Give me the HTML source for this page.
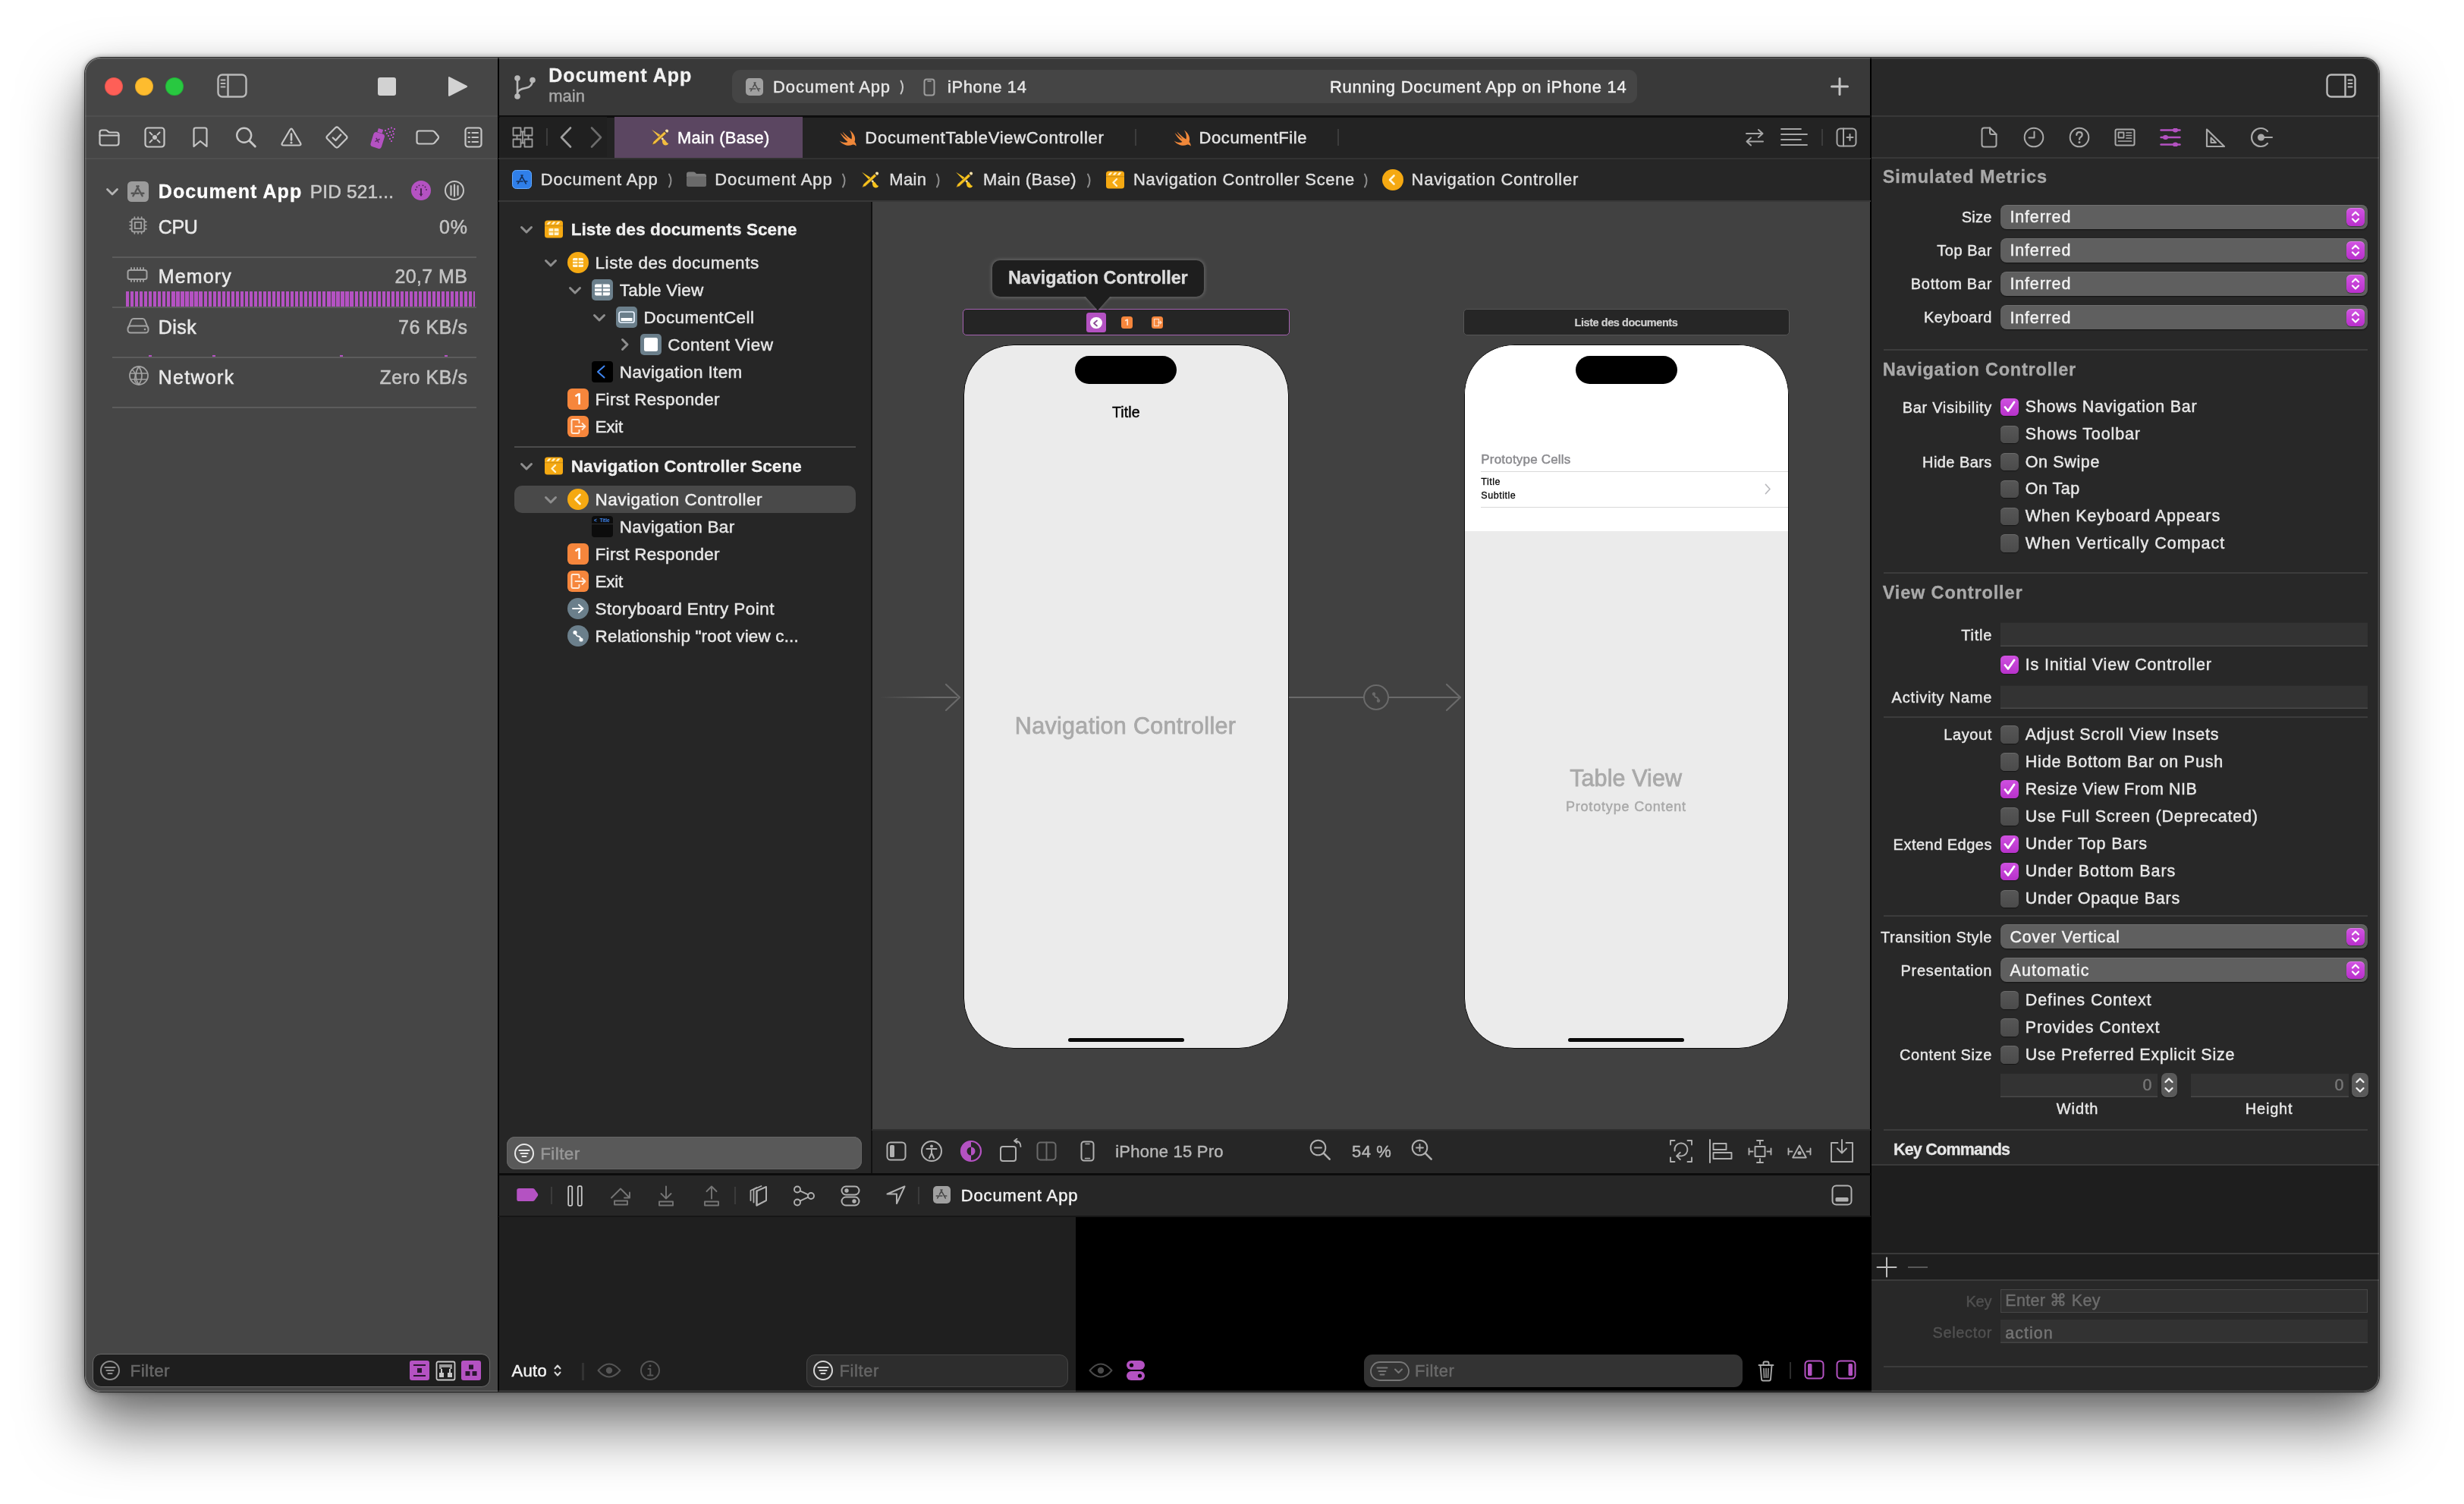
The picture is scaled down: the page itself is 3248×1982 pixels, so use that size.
<!DOCTYPE html>
<html lang="en"><head><meta charset="utf-8"><title>Xcode</title>
<style>
html,body{margin:0;padding:0}
body{width:3248px;height:1982px;background:#fff;position:relative;overflow:hidden;font-family:"Liberation Sans", sans-serif;}
#shadow{position:absolute;left:112px;top:76px;width:3024px;height:1758px;border-radius:21px;
 box-shadow:0 0 0 1px rgba(0,0,0,.75),0 0 6px 1px rgba(0,0,0,.35),0 44px 80px 4px rgba(0,0,0,.52),0 12px 34px rgba(0,0,0,.17);}
#win{position:absolute;left:0;top:0;width:3248px;height:1982px;clip-path:inset(76px 112px 148px 112px round 21px);will-change:transform;}
#win div,#win span,#win svg{position:absolute;box-sizing:border-box}
#win span{white-space:pre}

</style></head><body>
<div id="shadow"></div>
<div id="win">
<div style="left:112px;top:75px;width:545px;height:1760px;background:#464646;"></div>
<div style="left:657px;top:75px;width:1809px;height:78px;background:#393939;"></div>
<div style="left:657px;top:153px;width:1809px;height:55px;background:#232323;"></div>
<div style="left:657px;top:208px;width:1809px;height:57px;background:#262626;"></div>
<div style="left:657px;top:265px;width:492px;height:1282px;background:#262626;"></div>
<div style="left:1149px;top:265px;width:1317px;height:1224px;background:#414141;"></div>
<div style="left:1149px;top:1489px;width:1317px;height:58px;background:#262626;"></div>
<div style="left:657px;top:1547px;width:1809px;height:56px;background:#262626;"></div>
<div style="left:657px;top:1603px;width:761px;height:232px;background:#1f1f1f;"></div>
<div style="left:1418px;top:1603px;width:1048px;height:232px;background:#000;"></div>
<div style="left:2466px;top:75px;width:670px;height:1760px;background:#282828;"></div>
<div style="left:656px;top:75px;width:2px;height:1760px;background:#000;"></div>
<div style="left:2465px;top:75px;width:2px;height:1760px;background:#000;"></div>
<div style="left:1148px;top:265px;width:2px;height:1282px;background:#111;"></div>
<div style="left:657px;top:151.5px;width:1809px;height:3px;background:#0e0e0e;"></div>
<div style="left:657px;top:207.5px;width:1809px;height:2px;background:#323232;"></div>
<div style="left:657px;top:263.5px;width:1809px;height:2px;background:#383838;"></div>
<div style="left:657px;top:1545.5px;width:1809px;height:3px;background:#0c0c0c;"></div>
<div style="left:657px;top:1602px;width:1809px;height:2px;background:#161616;"></div>
<div style="left:1149px;top:1488px;width:1317px;height:2px;background:#2e2e2e;"></div>
<div style="left:112px;top:152.3px;width:544px;height:2px;background:#4f4f4f;"></div>
<div style="left:112px;top:208px;width:544px;height:2px;background:#4f4f4f;"></div>
<div style="left:2467px;top:152px;width:669px;height:2px;background:#383838;"></div>
<div style="left:2467px;top:207px;width:669px;height:2px;background:#383838;"></div>
<div style="left:138px;top:102px;width:24px;height:24px;background:#fe5f57;border-radius:50%;box-shadow:inset 0 0 0 1px rgba(0,0,0,.12);"></div>
<div style="left:178px;top:102px;width:24px;height:24px;background:#febc2e;border-radius:50%;box-shadow:inset 0 0 0 1px rgba(0,0,0,.12);"></div>
<div style="left:218px;top:102px;width:24px;height:24px;background:#28c840;border-radius:50%;box-shadow:inset 0 0 0 1px rgba(0,0,0,.12);"></div>
<svg style="left:286px;top:97px;" width="40" height="32" viewBox="0 0 40 32"><rect x="1.5" y="1.5" width="37" height="29" rx="5.5" fill="none" stroke="#b9b9b9" stroke-width="2.4" stroke-linecap="round" stroke-linejoin="round" /><path d="M14.5 2v28" fill="none" stroke="#b9b9b9" stroke-width="2.4" stroke-linecap="round" stroke-linejoin="round" /><path d="M5.5 8.5h5M5.5 13h5M5.5 17.5h5" fill="none" stroke="#b9b9b9" stroke-width="2" stroke-linecap="round" stroke-linejoin="round" /></svg>
<div style="left:498px;top:102px;width:24px;height:24px;background:#d2d2d2;border-radius:3px;"></div>
<svg style="left:589px;top:98px;" width="30" height="32" viewBox="0 0 30 32"><path d="M3.5 3.2 L26.5 15 Q28 16 26.5 17 L3.5 28.8 Q2 29.3 2 27.5 L2 4.5 Q2 2.7 3.5 3.2Z" fill="#d2d2d2"/></svg>
<svg style="left:130px;top:169px;" width="28" height="24" viewBox="0 0 28 24"><path d="M1.5 5.5 q0-3 3-3 h4.5 q1.5 0 2.5 1 l1 1 q1 1 2.5 1 h8.5 q3 0 3 3 v11 q0 3-3 3 h-19 q-3 0-3-3z" fill="none" stroke="#c6c6c6" stroke-width="2.2" stroke-linecap="round" stroke-linejoin="round" /><path d="M1.5 9.5h25" fill="none" stroke="#c6c6c6" stroke-width="2.2" stroke-linecap="round" stroke-linejoin="round" /></svg>
<svg style="left:190px;top:167px;" width="28" height="28" viewBox="0 0 28 28"><rect x="1.5" y="1.5" width="25" height="25" rx="3.5" fill="none" stroke="#c6c6c6" stroke-width="2.2" stroke-linecap="round" stroke-linejoin="round" /><circle cx="14" cy="14" r="3" fill="#c6c6c6"/><path d="M7.5 7.5l3 3M20.5 7.5l-3 3M7.5 20.5l3-3M20.5 20.5l-3-3" fill="none" stroke="#c6c6c6" stroke-width="2" stroke-linecap="round" stroke-linejoin="round" /></svg>
<svg style="left:254px;top:167px;" width="20" height="28" viewBox="0 0 20 28"><path d="M1.5 4 q0-2.5 2.5-2.5 h12 q2.5 0 2.5 2.5 v22 l-8.5-7 l-8.5 7z" fill="none" stroke="#c6c6c6" stroke-width="2.2" stroke-linecap="round" stroke-linejoin="round" /></svg>
<svg style="left:310px;top:166px;" width="30" height="30" viewBox="0 0 30 30"><circle cx="11.7" cy="12.3" r="9.5" fill="none" stroke="#c6c6c6" stroke-width="2.4" stroke-linecap="round" stroke-linejoin="round" /><path d="M18.8 19.500l7.5 7.5" fill="none" stroke="#c6c6c6" stroke-width="3" stroke-linecap="round" stroke-linejoin="round" /></svg>
<svg style="left:370px;top:168px;" width="28" height="26" viewBox="0 0 28 26"><path d="M12.3 3 q1.7-2.8 3.4 0 l10.3 17.5 q1.5 3-1.8 3 h-20.4 q-3.3 0-1.8-3z" fill="none" stroke="#c6c6c6" stroke-width="2.2" stroke-linecap="round" stroke-linejoin="round" /><path d="M14 8.500v8" fill="none" stroke="#c6c6c6" stroke-width="2.6" stroke-linecap="round" stroke-linejoin="round" /><circle cx="14" cy="20" r="1.6" fill="#c6c6c6"/></svg>
<svg style="left:429px;top:166px;" width="30" height="30" viewBox="0 0 30 30"><path d="M13.2 2.3 q1.8-1.6 3.6 0 l10.9 10.9 q1.6 1.8 0 3.6 l-10.9 10.9 q-1.8 1.6-3.6 0 l-10.9-10.9 q-1.6-1.8 0-3.600z" fill="none" stroke="#c6c6c6" stroke-width="2.2" stroke-linecap="round" stroke-linejoin="round" /><path d="M9.8 15.500l3.7 3.500l6.7-7.5" fill="none" stroke="#c6c6c6" stroke-width="2.4" stroke-linecap="round" stroke-linejoin="round" /></svg>
<svg style="left:488px;top:166px;" width="34" height="30" viewBox="0 0 34 30"><g transform="rotate(17 10 18)"><rect x="2.5" y="9" width="15" height="20" rx="3.5" fill="#b452c2"/><rect x="6.5" y="3.5" width="6.5" height="5" fill="#b452c2"/><path d="M7.3 16.500l5 5M12.3 16.500l-5 5" stroke="#5a2f63" stroke-width="1.5" fill="none"/></g><rect x="19" y="5" width="2" height="2" fill="#b452c2"/><rect x="23" y="3" width="2" height="2" fill="#b452c2"/><rect x="27" y="1.5" width="2" height="2" fill="#b452c2"/><rect x="21" y="9" width="2" height="2" fill="#b452c2"/><rect x="25" y="7" width="2" height="2" fill="#b452c2"/><rect x="29" y="6" width="2" height="2" fill="#b452c2"/><rect x="23" y="12" width="2" height="2" fill="#b452c2"/><rect x="27" y="11" width="2" height="2" fill="#b452c2"/><rect x="30" y="9.5" width="2" height="2" fill="#b452c2"/><rect x="25" y="16" width="2" height="2" fill="#b452c2"/><rect x="29" y="14" width="2" height="2" fill="#b452c2"/><rect x="27" y="19" width="2" height="2" fill="#b452c2"/><rect x="31" y="3" width="2" height="2" fill="#b452c2"/></svg>
<svg style="left:547.5px;top:171px;" width="32" height="20" viewBox="0 0 32 20"><path d="M1.5 4.5 q0-3 3-3 h17.5 q1.8 0 2.8 1.3 l4.8 5.7 q1 1.5 0 3 l-4.8 5.7 q-1 1.3-2.8 1.3 h-17.5 q-3 0-3-3z" fill="none" stroke="#c6c6c6" stroke-width="2.2" stroke-linecap="round" stroke-linejoin="round" /></svg>
<svg style="left:612px;top:167px;" width="24" height="28" viewBox="0 0 24 28"><rect x="1.5" y="1.5" width="21" height="25" rx="3.5" fill="none" stroke="#c6c6c6" stroke-width="2.2" stroke-linecap="round" stroke-linejoin="round" /><path d="M10.5 8h7.500M10.5 14h7.500M10.5 20h7.5" fill="none" stroke="#c6c6c6" stroke-width="2.2" stroke-linecap="round" stroke-linejoin="round" /><path d="M5.5 8h1.500M5.5 14h1.500M5.5 20h1.5" fill="none" stroke="#c6c6c6" stroke-width="2.2" stroke-linecap="round" stroke-linejoin="round" /></svg>
<svg style="left:139px;top:247px;" width="18" height="12" viewBox="0 0 18 12"><path d="M2.5 2.500l6.5 6.500l6.5-6.5" fill="none" stroke="#b5b5b5" stroke-width="2.8" stroke-linecap="round" stroke-linejoin="round" /></svg>
<div style="left:168px;top:238.5px;width:27.5px;height:27.5px;background:#9b9b9b;border-radius:5.500px;"></div>
<svg style="left:171.3px;top:241.8px;" width="21" height="21" viewBox="0 0 20 20"><path d="M11 3.2 L7.2 10 M5.6 13 L4.2 15.5 M9 3.2 L15.8 15.5 M2.5 12.2 H11 M14.2 12.2 H17.5" fill="none" stroke="#555555" stroke-width="2.3" stroke-linecap="round"/></svg>
<span style="left:208.8px;top:236.0px;font-size:25px;line-height:32px;color:#ffffff;letter-spacing:1.05px;font-weight:700;-webkit-text-stroke:0.35px;">Document App</span>
<span style="left:408.7px;top:236.5px;font-size:24.5px;line-height:32px;color:#c9c9c9;letter-spacing:0.15px;-webkit-text-stroke:0.51px;">PID 521...</span>
<div style="left:542px;top:238px;width:26px;height:26px;background:#b452c2;border-radius:50%;"></div>
<svg style="left:542px;top:238px;" width="26" height="26" viewBox="0 0 26 26"><path d="M13 11v8.5" stroke="#4a2452" stroke-width="2" fill="none" stroke-linecap="round"/><path d="M10.4 17.500l2.6 3l2.6-3z" fill="#4a2452"/><circle cx="6" cy="12" r="0.9" fill="#4a2452"/><circle cx="7.5" cy="8.5" r="0.9" fill="#4a2452"/><circle cx="10.5" cy="6.3" r="0.9" fill="#4a2452"/><circle cx="15.5" cy="6.3" r="0.9" fill="#4a2452"/><circle cx="18.5" cy="8.5" r="0.9" fill="#4a2452"/><circle cx="20" cy="12" r="0.9" fill="#4a2452"/></svg>
<svg style="left:584.6px;top:237px;" width="28" height="28" viewBox="0 0 28 28"><circle cx="14" cy="14" r="12" fill="none" stroke="#c4c4c4" stroke-width="2" stroke-linecap="round" stroke-linejoin="round" /><path d="M9.5 8v12M14 6.500v15M18.5 8v12" fill="none" stroke="#c4c4c4" stroke-width="2.2" stroke-linecap="round" stroke-linejoin="round" /></svg>
<svg style="left:168.6px;top:284.4px;" width="26" height="26" viewBox="0 0 28 28"><rect x="5" y="5" width="18" height="18" rx="2.5" fill="none" stroke="#a2a2a2" stroke-width="2" stroke-linecap="round" stroke-linejoin="round" /><rect x="9.5" y="9.5" width="9" height="9" fill="none" stroke="#a2a2a2" stroke-width="2" stroke-linecap="round" stroke-linejoin="round" /><path d="M9 2.2v2.300M9 23.500v2.300M2.2 9h2.300M23.5 9h2.3" fill="none" stroke="#a2a2a2" stroke-width="1.8" stroke-linecap="round" stroke-linejoin="round" /><path d="M14 2.2v2.300M14 23.500v2.300M2.2 14h2.300M23.5 14h2.3" fill="none" stroke="#a2a2a2" stroke-width="1.8" stroke-linecap="round" stroke-linejoin="round" /><path d="M19 2.2v2.300M19 23.500v2.300M2.2 19h2.300M23.5 19h2.3" fill="none" stroke="#a2a2a2" stroke-width="1.8" stroke-linecap="round" stroke-linejoin="round" /></svg>
<span style="left:208.8px;top:282.6px;font-size:25px;line-height:32px;color:#e9e9e9;letter-spacing:-0.43px;-webkit-text-stroke:0.53px;">CPU</span>
<span style="left:578.9px;top:282.6px;font-size:25px;line-height:32px;color:#c3c3c3;letter-spacing:0.93px;-webkit-text-stroke:0.53px;">0%</span>
<div style="left:148px;top:338.3px;width:480px;height:2px;background:#5c5c5c;"></div>
<svg style="left:166.5px;top:352px;" width="28" height="20" viewBox="0 0 28 20"><rect x="1.5" y="4" width="25" height="12" rx="2.5" fill="none" stroke="#a2a2a2" stroke-width="2" stroke-linecap="round" stroke-linejoin="round" /><path d="M6 1v2.500M6 16.500v2.5" fill="none" stroke="#a2a2a2" stroke-width="1.8" stroke-linecap="round" stroke-linejoin="round" /><path d="M10 1v2.500M10 16.500v2.5" fill="none" stroke="#a2a2a2" stroke-width="1.8" stroke-linecap="round" stroke-linejoin="round" /><path d="M14 1v2.500M14 16.500v2.5" fill="none" stroke="#a2a2a2" stroke-width="1.8" stroke-linecap="round" stroke-linejoin="round" /><path d="M18 1v2.500M18 16.500v2.5" fill="none" stroke="#a2a2a2" stroke-width="1.8" stroke-linecap="round" stroke-linejoin="round" /><path d="M22 1v2.500M22 16.500v2.5" fill="none" stroke="#a2a2a2" stroke-width="1.8" stroke-linecap="round" stroke-linejoin="round" /></svg>
<span style="left:208.8px;top:348.2px;font-size:25px;line-height:32px;color:#e9e9e9;letter-spacing:1.12px;-webkit-text-stroke:0.53px;">Memory</span>
<span style="left:520.4px;top:348.2px;font-size:25px;line-height:32px;color:#c3c3c3;letter-spacing:0.41px;-webkit-text-stroke:0.53px;">20,7 MB</span>
<div style="left:166px;top:384px;width:459.5px;height:20px;background:repeating-linear-gradient(90deg,#b452c2 0 4.200px,rgba(0,0,0,0) 4.200px 6.030px);"></div>
<div style="left:148px;top:404.3px;width:480px;height:2px;background:#5c5c5c;"></div>
<svg style="left:166.5px;top:418px;" width="30" height="22" viewBox="0 0 30 22"><path d="M2 14 l4-10 q1-2 3-2 h12 q2 0 3 2 l4 10" fill="none" stroke="#a2a2a2" stroke-width="2" stroke-linecap="round" stroke-linejoin="round" /><rect x="1.5" y="11.5" width="27" height="9" rx="3.5" fill="none" stroke="#a2a2a2" stroke-width="2" stroke-linecap="round" stroke-linejoin="round" /><circle cx="24" cy="16" r="1.3" fill="#a2a2a2"/></svg>
<span style="left:208.8px;top:414.8px;font-size:25px;line-height:32px;color:#e9e9e9;letter-spacing:0.47px;-webkit-text-stroke:0.53px;">Disk</span>
<span style="left:525.1px;top:414.8px;font-size:25px;line-height:32px;color:#c3c3c3;letter-spacing:0.56px;-webkit-text-stroke:0.53px;">76 KB/s</span>
<div style="left:196px;top:468px;width:4px;height:2px;background:#b452c2;"></div>
<div style="left:280px;top:468px;width:4px;height:2px;background:#b452c2;"></div>
<div style="left:448px;top:468px;width:4px;height:2px;background:#b452c2;"></div>
<div style="left:586px;top:468px;width:4px;height:2px;background:#b452c2;"></div>
<div style="left:148px;top:469.8px;width:480px;height:2px;background:#5c5c5c;"></div>
<svg style="left:169px;top:481px;" width="28" height="28" viewBox="0 0 28 28"><circle cx="14" cy="14" r="12" fill="none" stroke="#a2a2a2" stroke-width="1.8" stroke-linecap="round" stroke-linejoin="round" /><path d="M14 2 q-8 12 0 24 M14 2 q8 12 0 24 M2.5 11 h23 M3.5 19 h21" fill="none" stroke="#a2a2a2" stroke-width="1.6" stroke-linecap="round" stroke-linejoin="round" /><path d="M5 6 q6 5 4 10 q-2 5 3 9" fill="none" stroke="#a2a2a2" stroke-width="1.6" stroke-linecap="round" stroke-linejoin="round" /></svg>
<span style="left:208.8px;top:480.6px;font-size:25px;line-height:32px;color:#e9e9e9;letter-spacing:1.26px;-webkit-text-stroke:0.53px;">Network</span>
<span style="left:500.5px;top:480.6px;font-size:25px;line-height:32px;color:#c3c3c3;letter-spacing:0.54px;-webkit-text-stroke:0.53px;">Zero KB/s</span>
<div style="left:148px;top:536px;width:480px;height:2px;background:#5c5c5c;"></div>
<div style="left:122px;top:1784px;width:523.5px;height:44px;background:#1e1e1e;border-radius:11px;border:1.500px solid #6a6a6a;"></div>
<svg style="left:131px;top:1792px;" width="28" height="28" viewBox="0 0 28 28"><circle cx="14" cy="14" r="12" fill="none" stroke="#8d8d8d" stroke-width="2" stroke-linecap="round" stroke-linejoin="round" /><path d="M7.5 10h13M9.5 14h9M11.5 18h5" fill="none" stroke="#8d8d8d" stroke-width="2.2" stroke-linecap="round" stroke-linejoin="round" /></svg>
<span style="left:171.5px;top:1791.5px;font-size:22.5px;line-height:29px;color:#676767;letter-spacing:0.42px;-webkit-text-stroke:0.47px;">Filter</span>
<div style="left:540px;top:1793px;width:26px;height:26px;background:#b452c2;border-radius:3px;"></div>
<svg style="left:540px;top:1793px;" width="26" height="26" viewBox="0 0 26 26"><path d="M5 6h16M5 20h16" stroke="#2a1630" stroke-width="2" fill="none"/><rect x="10" y="10" width="6" height="6" fill="#2a1630"/></svg>
<svg style="left:573.5px;top:1792.5px;" width="27" height="27" viewBox="0 0 27 27"><rect x="1.5" y="1.5" width="24" height="24" rx="2" fill="none" stroke="#c8c8c8" stroke-width="1.8" stroke-linecap="round" stroke-linejoin="round" /><path d="M5 5h17v6h-3v-2h-11v2h-3z" fill="#9a9a9a"/><rect x="5" y="16" width="6" height="6" fill="#c8c8c8"/><rect x="16" y="16" width="6" height="6" fill="#c8c8c8"/><path d="M8 11v5M19 11v5" stroke="#c8c8c8" stroke-width="2"/></svg>
<div style="left:608px;top:1793px;width:26px;height:26px;background:#b452c2;border-radius:3px;"></div>
<svg style="left:608px;top:1793px;" width="26" height="26" viewBox="0 0 26 26"><rect x="10" y="5.5" width="6" height="6" fill="#2a1630"/><rect x="5.5" y="14" width="6" height="6" fill="#2a1630"/><rect x="14.5" y="14" width="6" height="6" fill="#2a1630"/></svg>
<svg style="left:677px;top:96.5px;" width="30" height="36" viewBox="0 0 30 36"><circle cx="5" cy="6" r="3.8" fill="#b8b8b8"/><circle cx="25" cy="8.5" r="3.8" fill="#b8b8b8"/><circle cx="5" cy="30" r="3.8" fill="#b8b8b8"/><path d="M5 6v24M25 8.5 q0 9-9 10.5 q-10 1.5-11 7" fill="none" stroke="#b8b8b8" stroke-width="2.6" stroke-linecap="round" stroke-linejoin="round" /></svg>
<span style="left:723.3px;top:83.0px;font-size:25px;line-height:32px;color:#f2f2f2;letter-spacing:1.01px;font-weight:700;-webkit-text-stroke:0.35px;">Document App</span>
<span style="left:723.3px;top:112.0px;font-size:22px;line-height:29px;color:#a8a8a8;letter-spacing:-0.02px;-webkit-text-stroke:0.46px;">main</span>
<div style="left:965px;top:92px;width:1193px;height:44px;background:#454545;border-radius:11px;"></div>
<div style="left:983px;top:103px;width:23px;height:23px;background:#a0a0a0;border-radius:5px;"></div>
<svg style="left:985.5px;top:105.5px;" width="18" height="18" viewBox="0 0 20 20"><path d="M11 3.2 L7.2 10 M5.6 13 L4.2 15.5 M9 3.2 L15.8 15.5 M2.5 12.2 H11 M14.2 12.2 H17.5" fill="none" stroke="#4f4f4f" stroke-width="1.7" stroke-linecap="round"/></svg>
<span style="left:1019.0px;top:100.0px;font-size:22px;line-height:29px;color:#e6e6e6;letter-spacing:0.89px;-webkit-text-stroke:0.46px;">Document App</span>
<svg style="left:1186px;top:104.5px;" width="8" height="20" viewBox="0 0 8 20"><path d="M1.5 1.5 q5 8.5 0 17" fill="none" stroke="#c9c9c9" stroke-width="2" stroke-linecap="round" stroke-linejoin="round" /></svg>
<svg style="left:1216.5px;top:102.5px;" width="16" height="24" viewBox="0 0 16 24"><rect x="1.5" y="1.5" width="13" height="21" rx="3" fill="none" stroke="#9d9d9d" stroke-width="2" stroke-linecap="round" stroke-linejoin="round" /><path d="M6 4h4" fill="none" stroke="#9d9d9d" stroke-width="1.6" stroke-linecap="round" stroke-linejoin="round" /></svg>
<span style="left:1249.0px;top:100.0px;font-size:22px;line-height:29px;color:#e6e6e6;letter-spacing:0.60px;-webkit-text-stroke:0.46px;">iPhone 14</span>
<span style="left:1752.9px;top:100.0px;font-size:22px;line-height:29px;color:#f0f0f0;letter-spacing:0.71px;-webkit-text-stroke:0.46px;">Running Document App on iPhone 14</span>
<svg style="left:2411.7px;top:101px;" width="26" height="26" viewBox="0 0 26 26"><path d="M13 2.5v21M2.5 13h21" fill="none" stroke="#c4c4c4" stroke-width="3" stroke-linecap="round" stroke-linejoin="round" /></svg>
<div style="left:659px;top:154px;width:141px;height:53px;background:#202020;"></div>
<svg style="left:675px;top:167px;" width="28" height="28" viewBox="0 0 28 28"><rect x="1.5" y="1.5" width="10" height="10" fill="none" stroke="#9c9c9c" stroke-width="1.8" stroke-linecap="round" stroke-linejoin="round" /><rect x="16.5" y="1.5" width="10" height="10" fill="none" stroke="#9c9c9c" stroke-width="1.8" stroke-linecap="round" stroke-linejoin="round" /><rect x="1.5" y="16.5" width="10" height="10" fill="none" stroke="#9c9c9c" stroke-width="1.8" stroke-linecap="round" stroke-linejoin="round" /><rect x="16.5" y="16.5" width="10" height="10" fill="none" stroke="#9c9c9c" stroke-width="1.8" stroke-linecap="round" stroke-linejoin="round" /><path d="M11.5 6.500h5M6.5 11.500v5M11.5 21.500h5M21.5 11.500v5M14 6.500v15" fill="none" stroke="#9c9c9c" stroke-width="1.8" stroke-linecap="round" stroke-linejoin="round" /></svg>
<div style="left:719.5px;top:169px;width:2px;height:23px;background:#3c3c3c;"></div>
<svg style="left:737px;top:166px;" width="18" height="30" viewBox="0 0 18 30"><path d="M15 2.500L3 15l12 12.5" fill="none" stroke="#a0a0a0" stroke-width="2.6" stroke-linecap="round" stroke-linejoin="round" /></svg>
<svg style="left:777px;top:166px;" width="18" height="30" viewBox="0 0 18 30"><path d="M3 2.500L15 15L3 27.5" fill="none" stroke="#6c6c6c" stroke-width="2.6" stroke-linecap="round" stroke-linejoin="round" /></svg>
<div style="left:810px;top:154px;width:248px;height:54px;background:#5b4661;"></div>
<svg style="left:857.5px;top:169px;" width="24" height="24" viewBox="0 0 24 24"><path d="M1 1.7 L12.6 9 L10.2 11.500z" fill="#f2bd3f"/><path d="M13.2 13.6 L15.2 11.9 L17.2 14.3 L15.2 16z" fill="#f9e3a8"/><path d="M15 16 Q14.5 21.5 19 22.6 Q22 22.8 23.3 20 Q21 19.8 20 17.5 Q18.5 14.5 16.6 14.500z" fill="#f2bd3f"/><path d="M1.6 21.7 L3.2 17.8 L17.7 4.3 L20.3 7 L5.7 20.400z" fill="#f2bd3f" stroke="#4d3a2a" stroke-width="0.6" stroke-linejoin="round"/><circle cx="21" cy="3.7" r="2.1" fill="#f9e3a8"/><path d="M18.3 3.7 L21 6.6" stroke="#4d3a2a" stroke-width="0.9" fill="none"/></svg>
<span style="left:893.0px;top:167.0px;font-size:22px;line-height:29px;color:#ffffff;letter-spacing:0.28px;-webkit-text-stroke:0.46px;">Main (Base)</span>
<svg style="left:1105px;top:169.5px;" width="26" height="24" viewBox="0 0 26 24"><path d="M15 1.5 C21 6 23.5 12 21.5 17 C23.5 19 24 21.5 23.5 22.5 C22 20.5 20 20 18.5 20.8 C14 23 7 22 1.5 15.5 C5.5 18 9.5 18.5 12.5 17 C8 13.5 4.5 9 2.5 5 C6 8.5 10.5 12 13 13.5 C10 10.5 7 6.5 5.5 3.5 C9.5 7.5 14 11.5 17.5 13.5 C18.5 10 17.5 5.5 15 1.500z" fill="#f0883a"/></svg>
<span style="left:1140.3px;top:167.0px;font-size:22px;line-height:29px;color:#e4e4e4;letter-spacing:0.73px;-webkit-text-stroke:0.46px;">DocumentTableViewController</span>
<div style="left:1496px;top:170px;width:2px;height:22px;background:#3c3c3c;"></div>
<svg style="left:1545.5px;top:169.5px;" width="26" height="24" viewBox="0 0 26 24"><path d="M15 1.5 C21 6 23.5 12 21.5 17 C23.5 19 24 21.5 23.5 22.5 C22 20.5 20 20 18.5 20.8 C14 23 7 22 1.5 15.5 C5.5 18 9.5 18.5 12.5 17 C8 13.5 4.5 9 2.5 5 C6 8.5 10.5 12 13 13.5 C10 10.5 7 6.5 5.5 3.5 C9.5 7.5 14 11.5 17.5 13.5 C18.5 10 17.5 5.5 15 1.500z" fill="#f0883a"/></svg>
<span style="left:1580.6px;top:167.0px;font-size:22px;line-height:29px;color:#e4e4e4;letter-spacing:0.56px;-webkit-text-stroke:0.46px;">DocumentFile</span>
<div style="left:1763.4px;top:170px;width:2px;height:22px;background:#3c3c3c;"></div>
<svg style="left:2299px;top:168px;" width="28" height="26" viewBox="0 0 28 26"><path d="M3 8h21M19 3l5.5 5l-5.5 5M25 18.500H4M9 13.500l-5.5 5l5.5 5" fill="none" stroke="#a6a6a6" stroke-width="2" stroke-linecap="round" stroke-linejoin="round" /></svg>
<svg style="left:2346px;top:168px;" width="38" height="26" viewBox="0 0 38 26"><path d="M2 2h26M2 9h34M2 16h26M2 23h34" fill="none" stroke="#a6a6a6" stroke-width="1.8" stroke-linecap="round" stroke-linejoin="round" /></svg>
<div style="left:2401.4px;top:170px;width:2px;height:22px;background:#3c3c3c;"></div>
<svg style="left:2420px;top:168px;" width="28" height="26" viewBox="0 0 28 26"><rect x="1.5" y="1.5" width="25" height="23" rx="4.5" fill="none" stroke="#a6a6a6" stroke-width="2" stroke-linecap="round" stroke-linejoin="round" /><path d="M10 1.500v23M14.5 13h8M18.5 9v8" fill="none" stroke="#a6a6a6" stroke-width="2" stroke-linecap="round" stroke-linejoin="round" /></svg>
<div style="left:675px;top:224px;width:25.5px;height:25px;background:#2f7fe9;border-radius:5.500px;border:1.500px solid #63aaff;"></div>
<svg style="left:678.8px;top:227.5px;" width="18" height="18" viewBox="0 0 20 20"><path d="M11 3.2 L7.2 10 M5.6 13 L4.2 15.5 M9 3.2 L15.8 15.5 M2.5 12.2 H11 M14.2 12.2 H17.5" fill="none" stroke="#15315c" stroke-width="1.9" stroke-linecap="round"/></svg>
<span style="left:712.8px;top:222.2px;font-size:22px;line-height:29px;color:#dedede;letter-spacing:0.87px;-webkit-text-stroke:0.46px;">Document App</span>
<svg style="left:879.5px;top:227.5px;" width="9" height="20" viewBox="0 0 9 20"><path d="M2 1.5 q5 8.5 0 17" fill="none" stroke="#8c8c8c" stroke-width="2" stroke-linecap="round" stroke-linejoin="round" /></svg>
<svg style="left:904px;top:225px;" width="28" height="22" viewBox="0 0 28 22"><path d="M1 4.5 q0-3 3-3 h6 q1.5 0 2.5 1 l1.5 1.5 h10 q3 0 3 3 v1.5 h-26z" fill="#7b7b7b"/><rect x="1" y="7.5" width="26" height="13.5" rx="2.5" fill="#6a6a6a"/></svg>
<span style="left:942.2px;top:222.2px;font-size:22px;line-height:29px;color:#dedede;letter-spacing:0.92px;-webkit-text-stroke:0.46px;">Document App</span>
<svg style="left:1109px;top:227.5px;" width="9" height="20" viewBox="0 0 9 20"><path d="M2 1.5 q5 8.5 0 17" fill="none" stroke="#8c8c8c" stroke-width="2" stroke-linecap="round" stroke-linejoin="round" /></svg>
<svg style="left:1135px;top:225px;" width="24" height="24" viewBox="0 0 24 24"><path d="M1 1.7 L12.6 9 L10.2 11.500z" fill="#f6c21c"/><path d="M13.2 13.6 L15.2 11.9 L17.2 14.3 L15.2 16z" fill="#f9e3a8"/><path d="M15 16 Q14.5 21.5 19 22.6 Q22 22.8 23.3 20 Q21 19.8 20 17.5 Q18.5 14.5 16.6 14.500z" fill="#f6c21c"/><path d="M1.6 21.7 L3.2 17.8 L17.7 4.3 L20.3 7 L5.7 20.400z" fill="#f6c21c" stroke="#4d3a2a" stroke-width="0.6" stroke-linejoin="round"/><circle cx="21" cy="3.7" r="2.1" fill="#f9e3a8"/><path d="M18.3 3.7 L21 6.6" stroke="#4d3a2a" stroke-width="0.9" fill="none"/></svg>
<span style="left:1172.3px;top:222.2px;font-size:22px;line-height:29px;color:#dedede;letter-spacing:0.35px;-webkit-text-stroke:0.46px;">Main</span>
<svg style="left:1233.2px;top:227.5px;" width="9" height="20" viewBox="0 0 9 20"><path d="M2 1.5 q5 8.5 0 17" fill="none" stroke="#8c8c8c" stroke-width="2" stroke-linecap="round" stroke-linejoin="round" /></svg>
<svg style="left:1259px;top:225px;" width="24" height="24" viewBox="0 0 24 24"><path d="M1 1.7 L12.6 9 L10.2 11.500z" fill="#f6c21c"/><path d="M13.2 13.6 L15.2 11.9 L17.2 14.3 L15.2 16z" fill="#f9e3a8"/><path d="M15 16 Q14.5 21.5 19 22.6 Q22 22.8 23.3 20 Q21 19.8 20 17.5 Q18.5 14.5 16.6 14.500z" fill="#f6c21c"/><path d="M1.6 21.7 L3.2 17.8 L17.7 4.3 L20.3 7 L5.7 20.400z" fill="#f6c21c" stroke="#4d3a2a" stroke-width="0.6" stroke-linejoin="round"/><circle cx="21" cy="3.7" r="2.1" fill="#f9e3a8"/><path d="M18.3 3.7 L21 6.6" stroke="#4d3a2a" stroke-width="0.9" fill="none"/></svg>
<span style="left:1296.0px;top:222.2px;font-size:22px;line-height:29px;color:#dedede;letter-spacing:0.40px;-webkit-text-stroke:0.46px;">Main (Base)</span>
<svg style="left:1431.5px;top:227.5px;" width="9" height="20" viewBox="0 0 9 20"><path d="M2 1.5 q5 8.5 0 17" fill="none" stroke="#8c8c8c" stroke-width="2" stroke-linecap="round" stroke-linejoin="round" /></svg>
<svg style="left:1457.2px;top:223.5px;" width="26" height="26" viewBox="0 0 26 26"><rect x="1" y="1.5" width="24" height="23" rx="3.5" fill="#f5a912"/><path d="M1 8.300h24" stroke="#fff5d8" stroke-width="0" /><path d="M3.5 6.800l2.8-3.600h3.200l-2.8 3.600z" fill="#fff3cf"/><path d="M9.5 6.800l2.8-3.600h3.200l-2.8 3.600z" fill="#fff3cf"/><path d="M15.5 6.800l2.8-3.600h3.200l-2.8 3.600z" fill="#fff3cf"/><rect x="1" y="8" width="24" height="1.3" fill="#b7831a" opacity=".55"/><path d="M15 12l-4.5 4.500l4.5 4.5" fill="none" stroke="#fff3cf" stroke-width="2.4" stroke-linecap="round" stroke-linejoin="round"/></svg>
<span style="left:1494.0px;top:222.2px;font-size:22px;line-height:29px;color:#dedede;letter-spacing:0.67px;-webkit-text-stroke:0.46px;">Navigation Controller Scene</span>
<svg style="left:1797.2px;top:227.5px;" width="9" height="20" viewBox="0 0 9 20"><path d="M2 1.5 q5 8.5 0 17" fill="none" stroke="#8c8c8c" stroke-width="2" stroke-linecap="round" stroke-linejoin="round" /></svg>
<div style="left:1822px;top:223px;width:28px;height:28px;background:#f5a912;border-radius:50%;"></div>
<svg style="left:1828px;top:229px;" width="14" height="16" viewBox="0 0 14 16"><path d="M9.5 2.500L4 8l5.5 5.5" fill="none" stroke="#fff6dc" stroke-width="2.6" stroke-linecap="round" stroke-linejoin="round" /></svg>
<span style="left:1860.6px;top:222.2px;font-size:22px;line-height:29px;color:#dedede;letter-spacing:0.71px;-webkit-text-stroke:0.46px;">Navigation Controller</span>
<svg style="left:684.8px;top:297px;" width="18" height="12" viewBox="0 0 18 12"><path d="M2.5 2.500l6.5 6.500l6.5-6.5" fill="none" stroke="#8e8e8e" stroke-width="3" stroke-linecap="round" stroke-linejoin="round" /></svg>
<svg style="left:717px;top:289px;" width="26" height="26" viewBox="0 0 26 26"><rect x="1" y="1.5" width="24" height="23" rx="3.5" fill="#f5a912"/><path d="M1 8.300h24" stroke="#fff5d8" stroke-width="0" /><path d="M3.5 6.800l2.8-3.600h3.200l-2.8 3.600z" fill="#fff3cf"/><path d="M9.5 6.800l2.8-3.600h3.200l-2.8 3.600z" fill="#fff3cf"/><path d="M15.5 6.800l2.8-3.600h3.200l-2.8 3.600z" fill="#fff3cf"/><rect x="1" y="8" width="24" height="1.3" fill="#b7831a" opacity=".55"/><rect x="6.5" y="12" width="13" height="9" rx="1" fill="#fff3cf"/><path d="M6.5 16.500h13M13 12v9" stroke="#f3b32f" stroke-width="1.4"/></svg>
<span style="left:752.7px;top:287.5px;font-size:22.5px;line-height:29px;color:#f0f0f0;letter-spacing:0.06px;font-weight:700;-webkit-text-stroke:0.32px;">Liste des documents Scene</span>
<svg style="left:717px;top:341px;" width="18" height="12" viewBox="0 0 18 12"><path d="M2.5 2.500l6.5 6.500l6.5-6.5" fill="none" stroke="#8e8e8e" stroke-width="3" stroke-linecap="round" stroke-linejoin="round" /></svg>
<div style="left:748px;top:332px;width:28px;height:28px;background:#f5a912;border-radius:50%;"></div>
<svg style="left:748px;top:332px;" width="28" height="28" viewBox="0 0 28 28"><rect x="7" y="8" width="14" height="12" rx="1.5" fill="#fff6dc"/><path d="M7 12h14M7 16h14M14 8v12" stroke="#f5a912" stroke-width="1.3"/></svg>
<span style="left:784.6px;top:331.5px;font-size:22.5px;line-height:29px;color:#e6e6e6;letter-spacing:0.51px;-webkit-text-stroke:0.47px;">Liste des documents</span>
<svg style="left:749px;top:377px;" width="18" height="12" viewBox="0 0 18 12"><path d="M2.5 2.500l6.5 6.500l6.5-6.5" fill="none" stroke="#8e8e8e" stroke-width="3" stroke-linecap="round" stroke-linejoin="round" /></svg>
<div style="left:780px;top:368px;width:28px;height:28px;background:#6b7f8b;border-radius:5px;"></div>
<svg style="left:780px;top:368px;" width="28" height="28" viewBox="0 0 28 28"><rect x="4" y="6.5" width="20" height="15" rx="2" fill="#fff"/><path d="M4 11.500h20M4 16.500h20M14 6.500v15" stroke="#6b7f8b" stroke-width="1.6"/></svg>
<span style="left:816.8px;top:367.5px;font-size:22.5px;line-height:29px;color:#e6e6e6;letter-spacing:0.24px;-webkit-text-stroke:0.47px;">Table View</span>
<svg style="left:781px;top:413px;" width="18" height="12" viewBox="0 0 18 12"><path d="M2.5 2.500l6.5 6.500l6.5-6.5" fill="none" stroke="#8e8e8e" stroke-width="3" stroke-linecap="round" stroke-linejoin="round" /></svg>
<div style="left:812px;top:404px;width:28px;height:28px;background:#6b7f8b;border-radius:5px;"></div>
<svg style="left:812px;top:404px;" width="28" height="28" viewBox="0 0 28 28"><rect x="4" y="7" width="20" height="14" rx="2.5" fill="none" stroke="#e9f3ff" stroke-width="1.7"/><rect x="6.5" y="15" width="15" height="4" fill="#fff"/></svg>
<span style="left:848.4px;top:403.5px;font-size:22.5px;line-height:29px;color:#e6e6e6;letter-spacing:0.38px;-webkit-text-stroke:0.47px;">DocumentCell</span>
<svg style="left:818px;top:445px;" width="12" height="18" viewBox="0 0 12 18"><path d="M2.5 2.500l6.5 6.500l-6.5 6.5" fill="none" stroke="#8e8e8e" stroke-width="3" stroke-linecap="round" stroke-linejoin="round" /></svg>
<div style="left:844px;top:440px;width:28px;height:28px;background:#6b7f8b;border-radius:5px;"></div>
<svg style="left:844px;top:440px;" width="28" height="28" viewBox="0 0 28 28"><rect x="5" y="5" width="18" height="18" rx="2.5" fill="#fff"/></svg>
<span style="left:880.3px;top:439.5px;font-size:22.5px;line-height:29px;color:#e6e6e6;letter-spacing:0.47px;-webkit-text-stroke:0.47px;">Content View</span>
<div style="left:780px;top:476px;width:28px;height:28px;background:#000;border-radius:4px;"></div>
<svg style="left:780px;top:476px;" width="28" height="28" viewBox="0 0 28 28"><path d="M16.5 6.500L8 14l8.5 7.5" fill="none" stroke="#3f86f2" stroke-width="2" stroke-linecap="round" stroke-linejoin="round"/></svg>
<span style="left:816.8px;top:475.5px;font-size:22.5px;line-height:29px;color:#e6e6e6;letter-spacing:0.37px;-webkit-text-stroke:0.47px;">Navigation Item</span>
<div style="left:748px;top:512px;width:28px;height:28px;background:#f6863c;border-radius:6px;"></div>
<svg style="left:748px;top:512px;" width="28" height="28" viewBox="0 0 28 28"><path d="M10.5 10.200l3.8-2.700h1.300v13.5" fill="none" stroke="#fff" stroke-width="2.6" stroke-linejoin="miter"/></svg>
<span style="left:784.6px;top:511.5px;font-size:22.5px;line-height:29px;color:#e6e6e6;letter-spacing:0.28px;-webkit-text-stroke:0.47px;">First Responder</span>
<div style="left:748px;top:548px;width:28px;height:28px;background:#f6863c;border-radius:6px;"></div>
<svg style="left:748px;top:548px;" width="28" height="28" viewBox="0 0 28 28"><path d="M15.5 10v-3.500q0-1.5-1.5-1.500h-7q-1.5 0-1.5 1.500v15q0 1.5 1.5 1.500h7q1.5 0 1.5-1.500v-3.5" fill="none" stroke="#ffe9d8" stroke-width="1.9"/><path d="M10.5 14h13M19.5 10l4 4l-4 4" fill="none" stroke="#ffe9d8" stroke-width="1.9" stroke-linecap="round" stroke-linejoin="round"/></svg>
<span style="left:784.6px;top:547.5px;font-size:22.5px;line-height:29px;color:#e6e6e6;letter-spacing:-0.28px;-webkit-text-stroke:0.47px;">Exit</span>
<div style="left:678px;top:588px;width:449.7px;height:2px;background:#4b4b4b;"></div>
<svg style="left:684.8px;top:609px;" width="18" height="12" viewBox="0 0 18 12"><path d="M2.5 2.500l6.5 6.500l6.5-6.5" fill="none" stroke="#8e8e8e" stroke-width="3" stroke-linecap="round" stroke-linejoin="round" /></svg>
<svg style="left:717px;top:601px;" width="26" height="26" viewBox="0 0 26 26"><rect x="1" y="1.5" width="24" height="23" rx="3.5" fill="#f5a912"/><path d="M1 8.300h24" stroke="#fff5d8" stroke-width="0" /><path d="M3.5 6.800l2.8-3.600h3.200l-2.8 3.600z" fill="#fff3cf"/><path d="M9.5 6.800l2.8-3.600h3.200l-2.8 3.600z" fill="#fff3cf"/><path d="M15.5 6.800l2.8-3.600h3.200l-2.8 3.600z" fill="#fff3cf"/><rect x="1" y="8" width="24" height="1.3" fill="#b7831a" opacity=".55"/><path d="M15 12l-4.5 4.500l4.5 4.5" fill="none" stroke="#fff3cf" stroke-width="2.4" stroke-linecap="round" stroke-linejoin="round"/></svg>
<span style="left:752.7px;top:599.5px;font-size:22.5px;line-height:29px;color:#f0f0f0;letter-spacing:0.11px;font-weight:700;-webkit-text-stroke:0.32px;">Navigation Controller Scene</span>
<div style="left:678px;top:640px;width:449.7px;height:36px;background:#494949;border-radius:10px;"></div>
<svg style="left:717px;top:653px;" width="18" height="12" viewBox="0 0 18 12"><path d="M2.5 2.500l6.5 6.500l6.5-6.5" fill="none" stroke="#8e8e8e" stroke-width="3" stroke-linecap="round" stroke-linejoin="round" /></svg>
<div style="left:748px;top:644px;width:28px;height:28px;background:#f5a912;border-radius:50%;"></div>
<svg style="left:748px;top:644px;" width="28" height="28" viewBox="0 0 28 28"><path d="M16.5 8L10.5 14l6 6" fill="none" stroke="#fff6dc" stroke-width="2.8" stroke-linecap="round" stroke-linejoin="round"/></svg>
<span style="left:784.6px;top:643.5px;font-size:22.5px;line-height:29px;color:#efefef;letter-spacing:0.49px;-webkit-text-stroke:0.47px;">Navigation Controller</span>
<div style="left:780px;top:680px;width:28px;height:28px;background:#0c0c0c;border-radius:4px;"></div>
<div style="left:780px;top:689.5px;width:28px;height:1px;background:#2c2c2c;"></div>
<span style="left:783px;top:680.500px;font-size:6.500px;line-height:9px;color:#3f86f2;font-weight:700;letter-spacing:0">&lt;  Title</span>
<span style="left:816.8px;top:679.5px;font-size:22.5px;line-height:29px;color:#e6e6e6;letter-spacing:0.29px;-webkit-text-stroke:0.47px;">Navigation Bar</span>
<div style="left:748px;top:716px;width:28px;height:28px;background:#f6863c;border-radius:6px;"></div>
<svg style="left:748px;top:716px;" width="28" height="28" viewBox="0 0 28 28"><path d="M10.5 10.200l3.8-2.700h1.300v13.5" fill="none" stroke="#fff" stroke-width="2.6" stroke-linejoin="miter"/></svg>
<span style="left:784.6px;top:715.5px;font-size:22.5px;line-height:29px;color:#e6e6e6;letter-spacing:0.28px;-webkit-text-stroke:0.47px;">First Responder</span>
<div style="left:748px;top:752px;width:28px;height:28px;background:#f6863c;border-radius:6px;"></div>
<svg style="left:748px;top:752px;" width="28" height="28" viewBox="0 0 28 28"><path d="M15.5 10v-3.500q0-1.5-1.5-1.500h-7q-1.5 0-1.5 1.500v15q0 1.5 1.5 1.500h7q1.5 0 1.5-1.500v-3.5" fill="none" stroke="#ffe9d8" stroke-width="1.9"/><path d="M10.5 14h13M19.5 10l4 4l-4 4" fill="none" stroke="#ffe9d8" stroke-width="1.9" stroke-linecap="round" stroke-linejoin="round"/></svg>
<span style="left:784.6px;top:751.5px;font-size:22.5px;line-height:29px;color:#e6e6e6;letter-spacing:-0.28px;-webkit-text-stroke:0.47px;">Exit</span>
<div style="left:748px;top:788px;width:28px;height:28px;background:#6b7f8b;border-radius:50%;"></div>
<svg style="left:748px;top:788px;" width="28" height="28" viewBox="0 0 28 28"><path d="M7 14h13M15 9l5.5 5l-5.5 5" fill="none" stroke="#fff" stroke-width="1.9" stroke-linecap="round" stroke-linejoin="round"/></svg>
<span style="left:784.6px;top:787.5px;font-size:22.5px;line-height:29px;color:#e6e6e6;letter-spacing:0.45px;-webkit-text-stroke:0.47px;">Storyboard Entry Point</span>
<div style="left:748px;top:824px;width:28px;height:28px;background:#6b7f8b;border-radius:50%;"></div>
<svg style="left:748px;top:824px;" width="28" height="28" viewBox="0 0 28 28"><circle cx="10" cy="9.5" r="2.6" fill="#fff"/><circle cx="18" cy="19" r="2.6" fill="#fff"/><path d="M10 9.5 q2 5 4 5 q3 0 4 4.5" fill="none" stroke="#fff" stroke-width="1.9"/></svg>
<span style="left:784.6px;top:823.5px;font-size:22.5px;line-height:29px;color:#e6e6e6;letter-spacing:0.14px;-webkit-text-stroke:0.47px;">Relationship &quot;root view c...</span>
<div style="left:668px;top:1498px;width:468px;height:43px;background:#595959;border-radius:11px;box-shadow:inset 0 0 0 1px #666;"></div>
<svg style="left:676.5px;top:1505.5px;" width="28" height="28" viewBox="0 0 28 28"><circle cx="14" cy="14" r="12" fill="none" stroke="#e8e8e8" stroke-width="2" stroke-linecap="round" stroke-linejoin="round" /><path d="M7.5 10h13M9.5 14h9M11.5 18h5" fill="none" stroke="#e8e8e8" stroke-width="2.2" stroke-linecap="round" stroke-linejoin="round" /></svg>
<span style="left:712.2px;top:1505.5px;font-size:22.5px;line-height:29px;color:#989898;letter-spacing:0.42px;-webkit-text-stroke:0.47px;">Filter</span>
<div style="left:1160px;top:917.8px;width:102px;height:2px;background:linear-gradient(90deg,rgba(106,106,106,0),#6a6a6a 70%);"></div>
<svg style="left:1244px;top:898.8px;" width="24" height="40" viewBox="0 0 24 40"><path d="M3 3L21 20L3 37" fill="none" stroke="#6a6a6a" stroke-width="2.2" stroke-linecap="round" stroke-linejoin="round" /></svg>
<div style="left:1699px;top:917.8px;width:225px;height:2px;background:#6a6a6a;"></div>
<svg style="left:1904px;top:898.8px;" width="24" height="40" viewBox="0 0 24 40"><path d="M3 3L21 20L3 37" fill="none" stroke="#6a6a6a" stroke-width="2.2" stroke-linecap="round" stroke-linejoin="round" /></svg>
<div style="left:1796.5px;top:902px;width:34px;height:34px;background:#414141;border-radius:50%;border:2.200px solid #6a6a6a;"></div>
<svg style="left:1803.5px;top:909px;" width="20" height="20" viewBox="0 0 20 20"><circle cx="7" cy="5.5" r="2.2" fill="#6a6a6a"/><circle cx="13" cy="14.5" r="2.2" fill="#6a6a6a"/><path d="M7 5.500q1 4.5 3 4.500q2.5 0 3 4.5" fill="none" stroke="#6a6a6a" stroke-width="1.8" stroke-linecap="round" stroke-linejoin="round" /></svg>
<div style="left:1270px;top:454px;width:428.5px;height:928px;background:#ebebeb;border-radius:66px;border:1.500px solid #0a0a0a;overflow:hidden;"></div>
<div style="left:1417.45px;top:468.5px;width:133.6px;height:37.2px;background:#000;border-radius:19px;"></div>
<div style="left:1407.95px;top:1367.8px;width:152.6px;height:5.6px;background:#0a0a0a;border-radius:3px;"></div>
<span style="left:1465.9px;top:531.0px;font-size:19.5px;line-height:25px;color:#000;letter-spacing:0.17px;-webkit-text-stroke:0.41px;">Title</span>
<span style="left:1337.8px;top:936.0px;font-size:30.5px;line-height:40px;color:#a9a9a9;letter-spacing:0.32px;-webkit-text-stroke:0.75px #a9a9a9;">Navigation Controller</span>
<div style="left:1268.5px;top:407px;width:431.5px;height:34.8px;background:#252525;border-radius:5px;border:1.300px solid #a562b1;"></div>
<div style="left:1308px;top:342.5px;width:278.8px;height:48px;background:#1e1e1e;border-radius:10px;box-shadow:0 0 5px 1px rgba(255,255,255,.22);"></div>
<svg style="left:1430px;top:389.5px;filter:drop-shadow(0 0 2px rgba(255,255,255,.25));" width="34" height="19" viewBox="0 0 34 19"><path d="M0 0h34L17 19z" fill="#1e1e1e"/></svg>
<div style="left:1425px;top:380px;width:45px;height:10.5px;background:#1e1e1e;"></div>
<span style="left:1329.0px;top:351.3px;font-size:23.5px;line-height:31px;color:#dcdcdc;letter-spacing:-0.11px;font-weight:700;-webkit-text-stroke:0.33px;">Navigation Controller</span>
<div style="left:1432px;top:411.6px;width:26px;height:26.3px;background:#b452c2;border-radius:3.500px;"></div>
<div style="left:1437px;top:417.7px;width:15.6px;height:15.6px;background:#fff;border-radius:50%;"></div>
<svg style="left:1440.3px;top:420.5px;" width="8" height="10" viewBox="0 0 8 10"><path d="M6 1.500L2 5l4 3.5" fill="none" stroke="#8a4a95" stroke-width="1.8" stroke-linecap="round" stroke-linejoin="round" /></svg>
<div style="left:1477.5px;top:417px;width:15.7px;height:15.7px;background:#f6863c;border-radius:3.500px;"></div>
<svg style="left:1477.3px;top:416.9px;" width="16" height="16" viewBox="0 0 16 16"><path d="M6.2 5.800l2.2-1.500h0.800v7.5" fill="none" stroke="#ffe2cc" stroke-width="1.7"/></svg>
<div style="left:1517.7px;top:417px;width:15.7px;height:15.7px;background:#f6863c;border-radius:3.500px;"></div>
<svg style="left:1517.5px;top:416.9px;" width="16" height="16" viewBox="0 0 16 16"><rect x="3.5" y="3.5" width="6" height="9" fill="none" stroke="#ffd9bf" stroke-width="1.3"/><path d="M8 8h5M11 6l2 2l-2 2" fill="none" stroke="#ffd9bf" stroke-width="1.3"/></svg>
<div style="left:1929.5px;top:454px;width:428.5px;height:928px;background:#ebebeb;border-radius:66px;border:1.500px solid #0a0a0a;overflow:hidden;"><div style="left:0;top:0;width:428.5px;height:245px;background:#fff"></div></div>
<div style="left:2076.95px;top:468.5px;width:133.6px;height:37.2px;background:#000;border-radius:19px;"></div>
<div style="left:2067.45px;top:1367.8px;width:152.6px;height:5.6px;background:#0a0a0a;border-radius:3px;"></div>
<div style="left:1928.5px;top:407px;width:430.5px;height:34.8px;background:#262626;border-radius:5px;border:1.5px solid #565656;"></div>
<span style="left:2075.5px;top:416.0px;font-size:14.5px;line-height:19px;color:#cfcfcf;letter-spacing:-0.44px;font-weight:700;-webkit-text-stroke:0.20px;">Liste des documents</span>
<span style="left:1952.3px;top:595.3px;font-size:17px;line-height:22px;color:#8a8a8e;letter-spacing:0.19px;-webkit-text-stroke:0.45px #8a8a8e;">Prototype Cells</span>
<div style="left:1952px;top:620.5px;width:405px;height:1.3px;background:#d9d9d9;"></div>
<span style="left:1952.3px;top:627.2px;font-size:12.5px;line-height:16px;color:#000;letter-spacing:0.47px;-webkit-text-stroke:0.26px;">Title</span>
<span style="left:1952.3px;top:645.0px;font-size:12.5px;line-height:16px;color:#000;letter-spacing:0.54px;-webkit-text-stroke:0.26px;">Subtitle</span>
<svg style="left:2326.2px;top:637.1px;" width="9" height="15" viewBox="0 0 9 15"><path d="M1.5 1.500L7 7.500L1.5 13.5" fill="none" stroke="#b9b9bd" stroke-width="1.7" stroke-linecap="round" stroke-linejoin="round" /></svg>
<div style="left:1952px;top:667.5px;width:405px;height:1.3px;background:#d9d9d9;"></div>
<span style="left:2069.2px;top:1005.0px;font-size:30.5px;line-height:40px;color:#a9a9a9;letter-spacing:0.10px;-webkit-text-stroke:0.75px #a9a9a9;">Table View</span>
<span style="left:2063.9px;top:1051.5px;font-size:18px;line-height:23px;color:#a9a9a9;letter-spacing:0.82px;-webkit-text-stroke:0.45px #a9a9a9;">Prototype Content</span>
<svg style="left:1167.5px;top:1504px;" width="27" height="26" viewBox="0 0 27 26"><rect x="1.5" y="1.5" width="24" height="23" rx="4.5" fill="none" stroke="#b0b0b0" stroke-width="2" stroke-linecap="round" stroke-linejoin="round" /><rect x="5" y="5" width="6" height="16" rx="1.5" fill="#b0b0b0"/></svg>
<svg style="left:1212.7px;top:1502px;" width="30" height="30" viewBox="0 0 30 30"><circle cx="15" cy="15" r="13" fill="none" stroke="#b0b0b0" stroke-width="2" stroke-linecap="round" stroke-linejoin="round" /><circle cx="15" cy="8.5" r="2" fill="#b0b0b0"/><path d="M8.5 12h13M15 12v6M15 17.500l-3 6.500M15 17.500l3 6.5" fill="none" stroke="#b0b0b0" stroke-width="2" stroke-linecap="round" stroke-linejoin="round" /></svg>
<svg style="left:1265px;top:1502px;" width="30" height="30" viewBox="0 0 30 30"><circle cx="15" cy="15" r="13" fill="none" stroke="#b452c2" stroke-width="2.2" stroke-linecap="round" stroke-linejoin="round" /><path d="M15 2a13 13 0 0 0 0 26z" fill="#b452c2"/><path d="M15 9.500a5.5 5.5 0 0 1 0 11z" fill="#b452c2"/><path d="M15 9.500a5.5 5.5 0 0 0 0 11z" fill="#262626"/></svg>
<svg style="left:1316px;top:1499.5px;" width="32" height="32" viewBox="0 0 32 32"><rect x="3" y="11" width="20" height="19" rx="3" fill="none" stroke="#b0b0b0" stroke-width="2" stroke-linecap="round" stroke-linejoin="round" /><path d="M29.5 11q0-7.5-8-7.500M24.5 0.800l-3.5 2.700l3.5 2.7" fill="none" stroke="#b0b0b0" stroke-width="1.8" stroke-linecap="round" stroke-linejoin="round" /></svg>
<svg style="left:1366px;top:1504px;" width="27" height="26" viewBox="0 0 27 26"><rect x="1.5" y="1.5" width="24" height="23" rx="4" fill="none" stroke="#6a6a6a" stroke-width="2" stroke-linecap="round" stroke-linejoin="round" /><path d="M13.5 1.500v23" fill="none" stroke="#6a6a6a" stroke-width="2" stroke-linecap="round" stroke-linejoin="round" /></svg>
<svg style="left:1423.8px;top:1502.7px;" width="19" height="28" viewBox="0 0 19 28"><rect x="1.5" y="1.5" width="16" height="25" rx="3.5" fill="none" stroke="#b0b0b0" stroke-width="2" stroke-linecap="round" stroke-linejoin="round" /><path d="M7 4.500h5M6.5 23.500h6" fill="none" stroke="#b0b0b0" stroke-width="1.5" stroke-linecap="round" stroke-linejoin="round" /></svg>
<span style="left:1470.2px;top:1503.0px;font-size:22px;line-height:29px;color:#b6b6b6;letter-spacing:0.24px;-webkit-text-stroke:0.46px;">iPhone 15 Pro</span>
<svg style="left:1725.5px;top:1501.3px;" width="30" height="30" viewBox="0 0 30 30"><circle cx="11.5" cy="11.5" r="9.8" fill="none" stroke="#b0b0b0" stroke-width="2" stroke-linecap="round" stroke-linejoin="round" /><path d="M18.7 18.700l8 8" fill="none" stroke="#b0b0b0" stroke-width="2.6" stroke-linecap="round" stroke-linejoin="round" /><path d="M7 11.500h9" fill="none" stroke="#b0b0b0" stroke-width="1.8" stroke-linecap="round" stroke-linejoin="round" /></svg>
<svg style="left:1859.8px;top:1501.3px;" width="30" height="30" viewBox="0 0 30 30"><circle cx="11.5" cy="11.5" r="9.8" fill="none" stroke="#b0b0b0" stroke-width="2" stroke-linecap="round" stroke-linejoin="round" /><path d="M18.7 18.700l8 8" fill="none" stroke="#b0b0b0" stroke-width="2.6" stroke-linecap="round" stroke-linejoin="round" /><path d="M7 11.500h9" fill="none" stroke="#b0b0b0" stroke-width="1.8" stroke-linecap="round" stroke-linejoin="round" /><path d="M11.5 7v9" fill="none" stroke="#b0b0b0" stroke-width="1.8" stroke-linecap="round" stroke-linejoin="round" /></svg>
<span style="left:1781.9px;top:1503.0px;font-size:22px;line-height:29px;color:#b6b6b6;letter-spacing:0.59px;-webkit-text-stroke:0.46px;">54 %</span>
<svg style="left:2200px;top:1500.6px;" width="32" height="32" viewBox="0 0 32 32"><path d="M2 7.5v-5.500h5.500M24.5 2h5.500v5.500M30 24.500v5.500h-5.500M7.5 30h-5.500v-5.5" fill="none" stroke="#b0b0b0" stroke-width="1.9" stroke-linecap="round" stroke-linejoin="round" /><path d="M7.6 15.600A8.5 8.5 0 1 1 17 22.400H10.200M14.8 17.800l-4.8 4.600l4.8 4.6" fill="none" stroke="#b0b0b0" stroke-width="1.9" stroke-linecap="round" stroke-linejoin="round" /></svg>
<svg style="left:2252px;top:1500.6px;" width="32" height="32" viewBox="0 0 32 32"><path d="M2 1v30" fill="none" stroke="#b0b0b0" stroke-width="2" stroke-linecap="round" stroke-linejoin="round" /><rect x="6.5" y="6" width="17" height="8" fill="none" stroke="#b0b0b0" stroke-width="1.9" stroke-linecap="round" stroke-linejoin="round" /><rect x="6.5" y="18" width="24" height="8" fill="none" stroke="#b0b0b0" stroke-width="1.9" stroke-linecap="round" stroke-linejoin="round" /></svg>
<svg style="left:2304px;top:1500.6px;" width="32" height="32" viewBox="0 0 32 32"><rect x="9.5" y="10" width="13" height="13" fill="none" stroke="#b0b0b0" stroke-width="1.9" stroke-linecap="round" stroke-linejoin="round" /><path d="M16 2v5M12 2h8M16 31v-5M12 31h8M1.5 12.500v8M1.5 16.500h5M30.5 12.500v8M30.5 16.500h-5" fill="none" stroke="#b0b0b0" stroke-width="1.9" stroke-linecap="round" stroke-linejoin="round" /></svg>
<svg style="left:2356px;top:1500.6px;" width="32" height="32" viewBox="0 0 32 32"><path d="M16 8.500l8.8 16h-17.600z" fill="none" stroke="#b0b0b0" stroke-width="1.9" stroke-linecap="round" stroke-linejoin="round" /><circle cx="16" cy="18.6" r="2.5" fill="#b0b0b0"/><path d="M1.5 12.500v8M1.5 16.500h5M30.5 12.500v8M30.5 16.500h-5" fill="none" stroke="#b0b0b0" stroke-width="1.9" stroke-linecap="round" stroke-linejoin="round" /></svg>
<svg style="left:2412px;top:1500.6px;" width="32" height="32" viewBox="0 0 32 32"><path d="M10.5 5h-8.500v25h28v-25h-8.5" fill="none" stroke="#b0b0b0" stroke-width="1.9" stroke-linecap="round" stroke-linejoin="round" /><path d="M16 1v17M10 12.500l6 6l6-6" fill="none" stroke="#b0b0b0" stroke-width="1.9" stroke-linecap="round" stroke-linejoin="round" /></svg>
<svg style="left:680px;top:1564.7px;" width="31" height="19" viewBox="0 0 32 20"><path d="M1 4q0-3 3-3h19q1.5 0 2.5 1l4.5 6.500q1 1.5 0 3l-4.5 6.500q-1 1-2.5 1h-19q-3 0-3-3z" fill="#b452c2"/></svg>
<div style="left:725.5px;top:1564px;width:2px;height:23px;background:#3b3b3b;"></div>
<svg style="left:748px;top:1561.5px;" width="20" height="28" viewBox="0 0 20 28"><rect x="1.2" y="1.2" width="5" height="25.6" rx="1.5" fill="none" stroke="#c8c8c8" stroke-width="1.8" stroke-linecap="round" stroke-linejoin="round" /><rect x="13.8" y="1.2" width="5" height="25.6" rx="1.5" fill="none" stroke="#c8c8c8" stroke-width="1.8" stroke-linecap="round" stroke-linejoin="round" /></svg>
<svg style="left:803.5px;top:1563px;" width="30" height="26" viewBox="0 0 30 26"><path d="M2 15.500l12-12l12 12M26 8.500v7h-7" fill="none" stroke="#757575" stroke-width="1.9" stroke-linecap="round" stroke-linejoin="round" /><rect x="6" y="19.5" width="17" height="5" fill="none" stroke="#757575" stroke-width="1.9" stroke-linecap="round" stroke-linejoin="round" /></svg>
<svg style="left:867px;top:1562px;" width="22" height="28" viewBox="0 0 22 28"><path d="M11 1.500v16M4.5 11l6.5 6.500l6.5-6.5" fill="none" stroke="#757575" stroke-width="1.9" stroke-linecap="round" stroke-linejoin="round" /><rect x="2" y="21.5" width="18" height="5" fill="none" stroke="#757575" stroke-width="1.9" stroke-linecap="round" stroke-linejoin="round" /></svg>
<svg style="left:927px;top:1562px;" width="22" height="28" viewBox="0 0 22 28"><path d="M11 17.500v-16M4.5 8l6.5-6.500l6.5 6.5" fill="none" stroke="#757575" stroke-width="1.9" stroke-linecap="round" stroke-linejoin="round" /><rect x="2" y="21.5" width="18" height="5" fill="none" stroke="#757575" stroke-width="1.9" stroke-linecap="round" stroke-linejoin="round" /></svg>
<div style="left:968px;top:1564px;width:2px;height:23px;background:#3b3b3b;"></div>
<svg style="left:987px;top:1560.5px;" width="26" height="30" viewBox="0 0 26 30"><path d="M10.5 8.500l12.5-5.500v18l-12.5 6.500z" fill="none" stroke="#b0b0b0" stroke-width="2" stroke-linecap="round" stroke-linejoin="round" /><path d="M10.5 8.500v19" fill="none" stroke="#b0b0b0" stroke-width="2" stroke-linecap="round" stroke-linejoin="round" /><path d="M6.5 6.500l10-4.500M6.5 6.500v17M2.5 8l8-4M2.5 8v13" fill="none" stroke="#b0b0b0" stroke-width="1.8" stroke-linecap="round" stroke-linejoin="round" /></svg>
<svg style="left:1045px;top:1561.5px;" width="30" height="28" viewBox="0 0 30 28"><circle cx="6" cy="5.5" r="4" fill="none" stroke="#b0b0b0" stroke-width="1.9" stroke-linecap="round" stroke-linejoin="round" /><circle cx="24" cy="14" r="4" fill="none" stroke="#b0b0b0" stroke-width="1.9" stroke-linecap="round" stroke-linejoin="round" /><circle cx="6" cy="22.5" r="4" fill="none" stroke="#b0b0b0" stroke-width="1.9" stroke-linecap="round" stroke-linejoin="round" /><path d="M9.6 7.300l10.8 5M9.6 20.700l10.8-5" fill="none" stroke="#b0b0b0" stroke-width="1.9" stroke-linecap="round" stroke-linejoin="round" /></svg>
<svg style="left:1107.5px;top:1561.5px;" width="26" height="28" viewBox="0 0 26 28"><rect x="1.5" y="1.5" width="23" height="11" rx="5.5" fill="none" stroke="#b0b0b0" stroke-width="2" stroke-linecap="round" stroke-linejoin="round" /><rect x="1.5" y="15.5" width="23" height="11" rx="5.5" fill="none" stroke="#b0b0b0" stroke-width="2" stroke-linecap="round" stroke-linejoin="round" /><circle cx="8" cy="7" r="2.7" fill="#b0b0b0"/><circle cx="18" cy="21" r="2.7" fill="#b0b0b0"/></svg>
<svg style="left:1167px;top:1560.5px;" width="28" height="28" viewBox="0 0 28 28"><path d="M25.5 2.500l-23 10h12.500v12.500z" fill="none" stroke="#b0b0b0" stroke-width="2" stroke-linecap="round" stroke-linejoin="round" /></svg>
<div style="left:1210px;top:1564px;width:2px;height:23px;background:#3b3b3b;"></div>
<div style="left:1229.7px;top:1562.7px;width:23.3px;height:23.3px;background:#a0a0a0;border-radius:5px;"></div>
<svg style="left:1232.3px;top:1565.3px;" width="18" height="18" viewBox="0 0 20 20"><path d="M11 3.2 L7.2 10 M5.6 13 L4.2 15.5 M9 3.2 L15.8 15.5 M2.5 12.2 H11 M14.2 12.2 H17.5" fill="none" stroke="#4a4a4a" stroke-width="1.8" stroke-linecap="round"/></svg>
<span style="left:1266.7px;top:1560.5px;font-size:22px;line-height:29px;color:#f2f2f2;letter-spacing:0.86px;-webkit-text-stroke:0.46px;">Document App</span>
<svg style="left:2413.5px;top:1561px;" width="28" height="28" viewBox="0 0 28 28"><rect x="1.5" y="1.5" width="25" height="25" rx="5" fill="none" stroke="#b0b0b0" stroke-width="2" stroke-linecap="round" stroke-linejoin="round" /><rect x="5.5" y="17" width="17" height="5.5" rx="1.5" fill="#b0b0b0"/></svg>
<span style="left:674.5px;top:1791.5px;font-size:22px;line-height:29px;color:#f2f2f2;letter-spacing:0.31px;-webkit-text-stroke:0.46px;">Auto</span>
<svg style="left:730px;top:1797px;" width="10" height="18" viewBox="0 0 10 18"><path d="M1.5 6.500l3.5-4l3.5 4M1.5 11.500l3.5 4l3.5-4" fill="none" stroke="#d8d8d8" stroke-width="2" stroke-linecap="round" stroke-linejoin="round" /></svg>
<div style="left:767.25px;top:1796px;width:2.5px;height:23px;background:#333;"></div>
<svg style="left:787px;top:1796px;" width="32" height="20" viewBox="0 0 32 20"><path d="M1.5 10q14.5-17 29 0q-14.5 17-29 0z" fill="none" stroke="#555" stroke-width="2" stroke-linecap="round" stroke-linejoin="round" /><circle cx="16" cy="10" r="4.2" fill="#555"/></svg>
<svg style="left:843px;top:1792px;" width="28" height="28" viewBox="0 0 28 28"><circle cx="14" cy="14" r="12" fill="none" stroke="#555" stroke-width="2" stroke-linecap="round" stroke-linejoin="round" /><path d="M11.5 12h2.800v8M11 20.500h6.5" fill="none" stroke="#555" stroke-width="2" stroke-linecap="round" stroke-linejoin="round" /><circle cx="14" cy="7.8" r="1.5" fill="#555"/></svg>
<div style="left:1062.5px;top:1784.5px;width:345px;height:43px;background:#2d2d2d;border-radius:11px;border:1.500px solid #454545;"></div>
<svg style="left:1071px;top:1792px;" width="28" height="28" viewBox="0 0 28 28"><circle cx="14" cy="14" r="12" fill="none" stroke="#d6d6d6" stroke-width="2" stroke-linecap="round" stroke-linejoin="round" /><path d="M7.5 10h13M9.5 14h9M11.5 18h5" fill="none" stroke="#d6d6d6" stroke-width="2.2" stroke-linecap="round" stroke-linejoin="round" /></svg>
<span style="left:1106.5px;top:1791.5px;font-size:22px;line-height:29px;color:#656565;letter-spacing:0.60px;-webkit-text-stroke:0.46px;">Filter</span>
<svg style="left:1434.7px;top:1796px;" width="32" height="20" viewBox="0 0 32 20"><path d="M1.5 10q14.5-17 29 0q-14.5 17-29 0z" fill="none" stroke="#4a4a4a" stroke-width="2" stroke-linecap="round" stroke-linejoin="round" /><circle cx="16" cy="10" r="4.2" fill="#4a4a4a"/></svg>
<svg style="left:1485px;top:1793px;" width="24" height="26" viewBox="0 0 24 26"><rect x="0" y="0" width="24" height="12" rx="6" fill="#b452c2"/><rect x="0" y="14" width="24" height="12" rx="6" fill="#b452c2"/><circle cx="6.5" cy="6" r="2.6" fill="#000"/><circle cx="17.5" cy="20" r="2.6" fill="#000"/></svg>
<div style="left:1797.5px;top:1785px;width:499px;height:43px;background:#333333;border-radius:11px;"></div>
<svg style="left:1805.5px;top:1794px;" width="52" height="26" viewBox="0 0 52 26"><rect x="1" y="1" width="50" height="24" rx="12" fill="none" stroke="#777" stroke-width="1.8" stroke-linecap="round" stroke-linejoin="round" /><path d="M9.5 8.500h13M11.5 13h9M13.5 17.500h5" fill="none" stroke="#777" stroke-width="2" stroke-linecap="round" stroke-linejoin="round" /><path d="M33 10.500l4.5 4.500l4.5-4.5" fill="none" stroke="#777" stroke-width="2" stroke-linecap="round" stroke-linejoin="round" /></svg>
<span style="left:1865.0px;top:1791.5px;font-size:22px;line-height:29px;color:#6a6a6a;letter-spacing:0.60px;-webkit-text-stroke:0.46px;">Filter</span>
<svg style="left:2316.7px;top:1793px;" width="22" height="28" viewBox="0 0 22 28"><path d="M1.5 6h19M7.5 5.500v-2.500q0-1.5 1.5-1.500h4q1.5 0 1.5 1.500v2.500M3.5 6.500l1.5 18q0.2 2 2 2h8q1.8 0 2-2l1.5-18" fill="none" stroke="#a8a8a8" stroke-width="1.9" stroke-linecap="round" stroke-linejoin="round" /><path d="M8 10.500l0.5 12M11 10.500v12M14 10.500l-0.5 12" fill="none" stroke="#a8a8a8" stroke-width="1.5" stroke-linecap="round" stroke-linejoin="round" /></svg>
<div style="left:2358.7px;top:1795px;width:2px;height:22px;background:#2c2c2c;"></div>
<svg style="left:2377.5px;top:1792px;" width="27" height="26" viewBox="0 0 27 26"><rect x="1.5" y="1.5" width="24" height="23" rx="4.5" fill="none" stroke="#b452c2" stroke-width="2" stroke-linecap="round" stroke-linejoin="round" /><rect x="5" y="5" width="5.5" height="16" rx="1.5" fill="#b452c2"/></svg>
<svg style="left:2419.8px;top:1792px;" width="27" height="26" viewBox="0 0 27 26"><rect x="1.5" y="1.5" width="24" height="23" rx="4.5" fill="none" stroke="#b452c2" stroke-width="2" stroke-linecap="round" stroke-linejoin="round" /><rect x="16.5" y="5" width="5.5" height="16" rx="1.5" fill="#b452c2"/></svg>
<svg style="left:3066.2px;top:97.2px;" width="40" height="32" viewBox="0 0 40 32"><rect x="1.5" y="1.5" width="37" height="29" rx="5.5" fill="none" stroke="#b9b9b9" stroke-width="2.4" stroke-linecap="round" stroke-linejoin="round" /><path d="M25.5 2v28" fill="none" stroke="#b9b9b9" stroke-width="2.4" stroke-linecap="round" stroke-linejoin="round" /><path d="M29.5 8.500h5M29.5 13h5M29.5 17.500h5" fill="none" stroke="#b9b9b9" stroke-width="2" stroke-linecap="round" stroke-linejoin="round" /></svg>
<svg style="left:2611px;top:167px;" width="22" height="28" viewBox="0 0 22 28"><path d="M1.5 4.500q0-3 3-3h7.500l8.5 8.500v13.500q0 3-3 3h-13q-3 0-3-3z" fill="none" stroke="#a9a9a9" stroke-width="2" stroke-linecap="round" stroke-linejoin="round" /><path d="M12 1.500v6q0 2.5 2.5 2.500h6" fill="none" stroke="#a9a9a9" stroke-width="2" stroke-linecap="round" stroke-linejoin="round" /></svg>
<svg style="left:2666.8px;top:167px;" width="28" height="28" viewBox="0 0 28 28"><circle cx="14" cy="14" r="12.3" fill="none" stroke="#a9a9a9" stroke-width="2" stroke-linecap="round" stroke-linejoin="round" /><path d="M14.5 6.500v8h-7" fill="none" stroke="#a9a9a9" stroke-width="2" stroke-linecap="round" stroke-linejoin="round" /></svg>
<svg style="left:2727px;top:167px;" width="28" height="28" viewBox="0 0 28 28"><circle cx="14" cy="14" r="12.3" fill="none" stroke="#a9a9a9" stroke-width="2" stroke-linecap="round" stroke-linejoin="round" /><path d="M10.3 11q0-3.8 3.7-3.800q3.7 0 3.7 3.300q0 2-2 3.200q-1.7 1-1.7 3" fill="none" stroke="#a9a9a9" stroke-width="2.2" stroke-linecap="round" stroke-linejoin="round" /><circle cx="14" cy="20.5" r="1.5" fill="#a9a9a9"/></svg>
<svg style="left:2787px;top:169px;" width="28" height="24" viewBox="0 0 28 24"><rect x="1.5" y="1.5" width="25" height="21" rx="2" fill="none" stroke="#a9a9a9" stroke-width="2" stroke-linecap="round" stroke-linejoin="round" /><rect x="5.5" y="5.5" width="7" height="7" fill="none" stroke="#a9a9a9" stroke-width="1.8" stroke-linecap="round" stroke-linejoin="round" /><path d="M16 6h6.500M16 9.500h6.500M16 13h6.500M5.5 17h17" fill="none" stroke="#a9a9a9" stroke-width="1.7" stroke-linecap="round" stroke-linejoin="round" /></svg>
<svg style="left:2847px;top:169px;" width="28" height="24" viewBox="0 0 28 24"><path d="M1.5 2.5h25" fill="none" stroke="#b452c2" stroke-width="2.4" stroke-linecap="round" stroke-linejoin="round" /><ellipse cx="20.5" cy="2.5" rx="3.5" ry="3" fill="#b452c2"/><path d="M1.5 12h25" fill="none" stroke="#b452c2" stroke-width="2.4" stroke-linecap="round" stroke-linejoin="round" /><ellipse cx="7.5" cy="12" rx="3.5" ry="3" fill="#b452c2"/><path d="M1.5 21.5h25" fill="none" stroke="#b452c2" stroke-width="2.4" stroke-linecap="round" stroke-linejoin="round" /><ellipse cx="20.5" cy="21.5" rx="3.5" ry="3" fill="#b452c2"/></svg>
<svg style="left:2906.8px;top:168px;" width="27" height="27" viewBox="0 0 27 27"><path d="M2 2.500l23 22.500h-23z" fill="none" stroke="#a9a9a9" stroke-width="2.2" stroke-linecap="round" stroke-linejoin="round" /><path d="M7.5 13.500l6.5 6.500h-6.500z" fill="none" stroke="#a9a9a9" stroke-width="2" stroke-linecap="round" stroke-linejoin="round" /></svg>
<svg style="left:2965.5px;top:167px;" width="30" height="28" viewBox="0 0 30 28"><path d="M23 6a12 12 0 1 0 0 16" fill="none" stroke="#a9a9a9" stroke-width="2.2" stroke-linecap="round" stroke-linejoin="round" /><circle cx="14.5" cy="14" r="4.6" fill="#a9a9a9"/><path d="M18 14h11" fill="none" stroke="#a9a9a9" stroke-width="2" stroke-linecap="round" stroke-linejoin="round" /></svg>
<span style="left:2481.7px;top:217.8px;font-size:23.5px;line-height:31px;color:#a9a9a9;letter-spacing:0.95px;font-weight:700;-webkit-text-stroke:0.33px;">Simulated Metrics</span>
<span style="left:2585.8px;top:273.0px;font-size:20px;line-height:26px;color:#e8e8e8;letter-spacing:0.22px;-webkit-text-stroke:0.42px;">Size</span>
<div style="left:2637.3px;top:270px;width:483.4px;height:31.8px;background:#5f5f5f;border-radius:8px;box-shadow:0 1px 1.500px rgba(0,0,0,.55),inset 0 1px 0 rgba(255,255,255,.10);"></div>
<span style="left:2649.5px;top:272.2px;font-size:21.5px;line-height:28px;color:#f2f2f2;letter-spacing:0.82px;-webkit-text-stroke:0.45px;">Inferred</span>
<div style="left:3092.8px;top:274.2px;width:24.2px;height:23.8px;border-radius:6px;background:linear-gradient(#d154e2,#b92fcc);box-shadow:0 1px 1px rgba(0,0,0,.4),inset 0 1px 0 rgba(255,255,255,.25);"></div>
<svg style="left:3098.9px;top:277.1px;" width="12" height="18" viewBox="0 0 12 18"><path d="M2 6.500l4-4l4 4M2 11.500l4 4l4-4" fill="none" stroke="#fff" stroke-width="2.2" stroke-linecap="round" stroke-linejoin="round" /></svg>
<span style="left:2553.3px;top:317.2px;font-size:20px;line-height:26px;color:#e8e8e8;letter-spacing:0.52px;-webkit-text-stroke:0.42px;">Top Bar</span>
<div style="left:2637.3px;top:314.2px;width:483.4px;height:31.8px;background:#5f5f5f;border-radius:8px;box-shadow:0 1px 1.500px rgba(0,0,0,.55),inset 0 1px 0 rgba(255,255,255,.10);"></div>
<span style="left:2649.5px;top:316.4px;font-size:21.5px;line-height:28px;color:#f2f2f2;letter-spacing:0.82px;-webkit-text-stroke:0.45px;">Inferred</span>
<div style="left:3092.8px;top:318.4px;width:24.2px;height:23.8px;border-radius:6px;background:linear-gradient(#d154e2,#b92fcc);box-shadow:0 1px 1px rgba(0,0,0,.4),inset 0 1px 0 rgba(255,255,255,.25);"></div>
<svg style="left:3098.9px;top:321.3px;" width="12" height="18" viewBox="0 0 12 18"><path d="M2 6.500l4-4l4 4M2 11.500l4 4l4-4" fill="none" stroke="#fff" stroke-width="2.2" stroke-linecap="round" stroke-linejoin="round" /></svg>
<span style="left:2518.8px;top:361.2px;font-size:20px;line-height:26px;color:#e8e8e8;letter-spacing:0.73px;-webkit-text-stroke:0.42px;">Bottom Bar</span>
<div style="left:2637.3px;top:358.2px;width:483.4px;height:31.8px;background:#5f5f5f;border-radius:8px;box-shadow:0 1px 1.500px rgba(0,0,0,.55),inset 0 1px 0 rgba(255,255,255,.10);"></div>
<span style="left:2649.5px;top:360.4px;font-size:21.5px;line-height:28px;color:#f2f2f2;letter-spacing:0.82px;-webkit-text-stroke:0.45px;">Inferred</span>
<div style="left:3092.8px;top:362.4px;width:24.2px;height:23.8px;border-radius:6px;background:linear-gradient(#d154e2,#b92fcc);box-shadow:0 1px 1px rgba(0,0,0,.4),inset 0 1px 0 rgba(255,255,255,.25);"></div>
<svg style="left:3098.9px;top:365.3px;" width="12" height="18" viewBox="0 0 12 18"><path d="M2 6.500l4-4l4 4M2 11.500l4 4l4-4" fill="none" stroke="#fff" stroke-width="2.2" stroke-linecap="round" stroke-linejoin="round" /></svg>
<span style="left:2535.9px;top:405.3px;font-size:20px;line-height:26px;color:#e8e8e8;letter-spacing:0.55px;-webkit-text-stroke:0.42px;">Keyboard</span>
<div style="left:2637.3px;top:402.3px;width:483.4px;height:31.8px;background:#5f5f5f;border-radius:8px;box-shadow:0 1px 1.500px rgba(0,0,0,.55),inset 0 1px 0 rgba(255,255,255,.10);"></div>
<span style="left:2649.5px;top:404.5px;font-size:21.5px;line-height:28px;color:#f2f2f2;letter-spacing:0.82px;-webkit-text-stroke:0.45px;">Inferred</span>
<div style="left:3092.8px;top:406.5px;width:24.2px;height:23.8px;border-radius:6px;background:linear-gradient(#d154e2,#b92fcc);box-shadow:0 1px 1px rgba(0,0,0,.4),inset 0 1px 0 rgba(255,255,255,.25);"></div>
<svg style="left:3098.9px;top:409.4px;" width="12" height="18" viewBox="0 0 12 18"><path d="M2 6.500l4-4l4 4M2 11.500l4 4l4-4" fill="none" stroke="#fff" stroke-width="2.2" stroke-linecap="round" stroke-linejoin="round" /></svg>
<div style="left:2482.8px;top:460.4px;width:637.9px;height:2px;background:#3c3c3c;"></div>
<span style="left:2481.7px;top:472.0px;font-size:23.5px;line-height:31px;color:#a9a9a9;letter-spacing:0.78px;font-weight:700;-webkit-text-stroke:0.33px;">Navigation Controller</span>
<span style="left:2507.7px;top:523.7px;font-size:20px;line-height:26px;color:#e8e8e8;letter-spacing:0.70px;-webkit-text-stroke:0.42px;">Bar Visibility</span>
<div style="left:2637.3px;top:524.6px;width:23.6px;height:23.6px;border-radius:5.500px;background:linear-gradient(#cf50e0,#b732ca);box-shadow:0 1px 1px rgba(0,0,0,.4);"></div>
<svg style="left:2637.1px;top:524.4px;" width="24" height="24" viewBox="0 0 24 24"><path d="M6 12.500l4 5l8-11.5" fill="none" stroke="#fff" stroke-width="2.8" stroke-linecap="round" stroke-linejoin="round" /></svg>
<span style="left:2669.7px;top:522.4px;font-size:21.5px;line-height:28px;color:#e8e8e8;letter-spacing:0.76px;-webkit-text-stroke:0.45px;">Shows Navigation Bar</span>
<div style="left:2637.3px;top:560.6px;width:23.6px;height:23.6px;border-radius:5.500px;background:linear-gradient(#575757,#4b4b4b);box-shadow:0 1px 1px rgba(0,0,0,.45),inset 0 1px 0 rgba(255,255,255,.12);"></div>
<span style="left:2669.7px;top:558.4px;font-size:21.5px;line-height:28px;color:#e8e8e8;letter-spacing:0.89px;-webkit-text-stroke:0.45px;">Shows Toolbar</span>
<span style="left:2534.0px;top:595.7px;font-size:20px;line-height:26px;color:#e8e8e8;letter-spacing:0.44px;-webkit-text-stroke:0.42px;">Hide Bars</span>
<div style="left:2637.3px;top:596.7px;width:23.6px;height:23.6px;border-radius:5.500px;background:linear-gradient(#575757,#4b4b4b);box-shadow:0 1px 1px rgba(0,0,0,.45),inset 0 1px 0 rgba(255,255,255,.12);"></div>
<span style="left:2669.7px;top:594.5px;font-size:21.5px;line-height:28px;color:#e8e8e8;letter-spacing:0.64px;-webkit-text-stroke:0.45px;">On Swipe</span>
<div style="left:2637.3px;top:632.5px;width:23.6px;height:23.6px;border-radius:5.500px;background:linear-gradient(#575757,#4b4b4b);box-shadow:0 1px 1px rgba(0,0,0,.45),inset 0 1px 0 rgba(255,255,255,.12);"></div>
<span style="left:2669.7px;top:630.3px;font-size:21.5px;line-height:28px;color:#e8e8e8;letter-spacing:0.54px;-webkit-text-stroke:0.45px;">On Tap</span>
<div style="left:2637.3px;top:668.5px;width:23.6px;height:23.6px;border-radius:5.500px;background:linear-gradient(#575757,#4b4b4b);box-shadow:0 1px 1px rgba(0,0,0,.45),inset 0 1px 0 rgba(255,255,255,.12);"></div>
<span style="left:2669.7px;top:666.3px;font-size:21.5px;line-height:28px;color:#e8e8e8;letter-spacing:0.87px;-webkit-text-stroke:0.45px;">When Keyboard Appears</span>
<div style="left:2637.3px;top:704.4px;width:23.6px;height:23.6px;border-radius:5.500px;background:linear-gradient(#575757,#4b4b4b);box-shadow:0 1px 1px rgba(0,0,0,.45),inset 0 1px 0 rgba(255,255,255,.12);"></div>
<span style="left:2669.7px;top:702.2px;font-size:21.5px;line-height:28px;color:#e8e8e8;letter-spacing:1.02px;-webkit-text-stroke:0.45px;">When Vertically Compact</span>
<div style="left:2482.8px;top:754px;width:637.9px;height:2px;background:#3c3c3c;"></div>
<span style="left:2481.7px;top:765.5px;font-size:23.5px;line-height:31px;color:#a9a9a9;letter-spacing:0.85px;font-weight:700;-webkit-text-stroke:0.33px;">View Controller</span>
<span style="left:2585.2px;top:823.8px;font-size:20px;line-height:26px;color:#e8e8e8;letter-spacing:0.79px;-webkit-text-stroke:0.42px;">Title</span>
<div style="left:2637.3px;top:820px;width:483.4px;height:31.7px;background:#333333;box-shadow:inset 0 -1.500px 0 #4a4a4a, inset 0 1px 0 #2b2b2b;"></div>
<div style="left:2637.3px;top:864.2px;width:23.6px;height:23.6px;border-radius:5.500px;background:linear-gradient(#cf50e0,#b732ca);box-shadow:0 1px 1px rgba(0,0,0,.4);"></div>
<svg style="left:2637.1px;top:864px;" width="24" height="24" viewBox="0 0 24 24"><path d="M6 12.500l4 5l8-11.5" fill="none" stroke="#fff" stroke-width="2.8" stroke-linecap="round" stroke-linejoin="round" /></svg>
<span style="left:2669.7px;top:862.0px;font-size:21.5px;line-height:28px;color:#e8e8e8;letter-spacing:0.84px;-webkit-text-stroke:0.45px;">Is Initial View Controller</span>
<span style="left:2493.6px;top:905.5px;font-size:20px;line-height:26px;color:#e8e8e8;letter-spacing:0.80px;-webkit-text-stroke:0.42px;">Activity Name</span>
<div style="left:2637.3px;top:902.7px;width:483.4px;height:31.1px;background:#333333;box-shadow:inset 0 -1.500px 0 #4a4a4a, inset 0 1px 0 #2b2b2b;"></div>
<div style="left:2482.8px;top:943.8px;width:637.9px;height:2px;background:#3c3c3c;"></div>
<span style="left:2562.3px;top:955.3px;font-size:20px;line-height:26px;color:#e8e8e8;letter-spacing:0.61px;-webkit-text-stroke:0.42px;">Layout</span>
<div style="left:2637.3px;top:956.1px;width:23.6px;height:23.6px;border-radius:5.500px;background:linear-gradient(#575757,#4b4b4b);box-shadow:0 1px 1px rgba(0,0,0,.45),inset 0 1px 0 rgba(255,255,255,.12);"></div>
<span style="left:2669.7px;top:953.9px;font-size:21.5px;line-height:28px;color:#e8e8e8;letter-spacing:0.83px;-webkit-text-stroke:0.45px;">Adjust Scroll View Insets</span>
<div style="left:2637.3px;top:992.2px;width:23.6px;height:23.6px;border-radius:5.500px;background:linear-gradient(#575757,#4b4b4b);box-shadow:0 1px 1px rgba(0,0,0,.45),inset 0 1px 0 rgba(255,255,255,.12);"></div>
<span style="left:2669.7px;top:990.0px;font-size:21.5px;line-height:28px;color:#e8e8e8;letter-spacing:0.82px;-webkit-text-stroke:0.45px;">Hide Bottom Bar on Push</span>
<div style="left:2637.3px;top:1028.3px;width:23.6px;height:23.6px;border-radius:5.500px;background:linear-gradient(#cf50e0,#b732ca);box-shadow:0 1px 1px rgba(0,0,0,.4);"></div>
<svg style="left:2637.1px;top:1028.1px;" width="24" height="24" viewBox="0 0 24 24"><path d="M6 12.500l4 5l8-11.5" fill="none" stroke="#fff" stroke-width="2.8" stroke-linecap="round" stroke-linejoin="round" /></svg>
<span style="left:2669.7px;top:1026.1px;font-size:21.5px;line-height:28px;color:#e8e8e8;letter-spacing:0.54px;-webkit-text-stroke:0.45px;">Resize View From NIB</span>
<div style="left:2637.3px;top:1064.4px;width:23.6px;height:23.6px;border-radius:5.500px;background:linear-gradient(#575757,#4b4b4b);box-shadow:0 1px 1px rgba(0,0,0,.45),inset 0 1px 0 rgba(255,255,255,.12);"></div>
<span style="left:2669.7px;top:1062.2px;font-size:21.5px;line-height:28px;color:#e8e8e8;letter-spacing:0.81px;-webkit-text-stroke:0.45px;">Use Full Screen (Deprecated)</span>
<span style="left:2495.6px;top:1099.7px;font-size:20px;line-height:26px;color:#e8e8e8;letter-spacing:0.48px;-webkit-text-stroke:0.42px;">Extend Edges</span>
<div style="left:2637.3px;top:1100.5px;width:23.6px;height:23.6px;border-radius:5.500px;background:linear-gradient(#cf50e0,#b732ca);box-shadow:0 1px 1px rgba(0,0,0,.4);"></div>
<svg style="left:2637.1px;top:1100.3px;" width="24" height="24" viewBox="0 0 24 24"><path d="M6 12.500l4 5l8-11.5" fill="none" stroke="#fff" stroke-width="2.8" stroke-linecap="round" stroke-linejoin="round" /></svg>
<span style="left:2669.7px;top:1098.3px;font-size:21.5px;line-height:28px;color:#e8e8e8;letter-spacing:0.87px;-webkit-text-stroke:0.45px;">Under Top Bars</span>
<div style="left:2637.3px;top:1136.5px;width:23.6px;height:23.6px;border-radius:5.500px;background:linear-gradient(#cf50e0,#b732ca);box-shadow:0 1px 1px rgba(0,0,0,.4);"></div>
<svg style="left:2637.1px;top:1136.3px;" width="24" height="24" viewBox="0 0 24 24"><path d="M6 12.500l4 5l8-11.5" fill="none" stroke="#fff" stroke-width="2.8" stroke-linecap="round" stroke-linejoin="round" /></svg>
<span style="left:2669.7px;top:1134.3px;font-size:21.5px;line-height:28px;color:#e8e8e8;letter-spacing:0.92px;-webkit-text-stroke:0.45px;">Under Bottom Bars</span>
<div style="left:2637.3px;top:1172.5px;width:23.6px;height:23.6px;border-radius:5.500px;background:linear-gradient(#575757,#4b4b4b);box-shadow:0 1px 1px rgba(0,0,0,.45),inset 0 1px 0 rgba(255,255,255,.12);"></div>
<span style="left:2669.7px;top:1170.3px;font-size:21.5px;line-height:28px;color:#e8e8e8;letter-spacing:0.77px;-webkit-text-stroke:0.45px;">Under Opaque Bars</span>
<div style="left:2482.8px;top:1205.6px;width:637.9px;height:2px;background:#3c3c3c;"></div>
<span style="left:2479.0px;top:1221.5px;font-size:20px;line-height:26px;color:#e8e8e8;letter-spacing:0.62px;-webkit-text-stroke:0.42px;">Transition Style</span>
<div style="left:2637.3px;top:1218.3px;width:483.4px;height:31.8px;background:#5f5f5f;border-radius:8px;box-shadow:0 1px 1.500px rgba(0,0,0,.55),inset 0 1px 0 rgba(255,255,255,.10);"></div>
<span style="left:2649.5px;top:1220.5px;font-size:21.5px;line-height:28px;color:#f2f2f2;letter-spacing:0.81px;-webkit-text-stroke:0.45px;">Cover Vertical</span>
<div style="left:3092.8px;top:1222.5px;width:24.2px;height:23.8px;border-radius:6px;background:linear-gradient(#d154e2,#b92fcc);box-shadow:0 1px 1px rgba(0,0,0,.4),inset 0 1px 0 rgba(255,255,255,.25);"></div>
<svg style="left:3098.9px;top:1225.4px;" width="12" height="18" viewBox="0 0 12 18"><path d="M2 6.500l4-4l4 4M2 11.500l4 4l4-4" fill="none" stroke="#fff" stroke-width="2.2" stroke-linecap="round" stroke-linejoin="round" /></svg>
<span style="left:2505.5px;top:1265.5px;font-size:20px;line-height:26px;color:#e8e8e8;letter-spacing:0.69px;-webkit-text-stroke:0.42px;">Presentation</span>
<div style="left:2637.3px;top:1262.3px;width:483.4px;height:31.8px;background:#5f5f5f;border-radius:8px;box-shadow:0 1px 1.500px rgba(0,0,0,.55),inset 0 1px 0 rgba(255,255,255,.10);"></div>
<span style="left:2649.5px;top:1264.5px;font-size:21.5px;line-height:28px;color:#f2f2f2;letter-spacing:1.04px;-webkit-text-stroke:0.45px;">Automatic</span>
<div style="left:3092.8px;top:1266.5px;width:24.2px;height:23.8px;border-radius:6px;background:linear-gradient(#d154e2,#b92fcc);box-shadow:0 1px 1px rgba(0,0,0,.4),inset 0 1px 0 rgba(255,255,255,.25);"></div>
<svg style="left:3098.9px;top:1269.4px;" width="12" height="18" viewBox="0 0 12 18"><path d="M2 6.500l4-4l4 4M2 11.500l4 4l4-4" fill="none" stroke="#fff" stroke-width="2.2" stroke-linecap="round" stroke-linejoin="round" /></svg>
<div style="left:2637.3px;top:1306.2px;width:23.6px;height:23.6px;border-radius:5.500px;background:linear-gradient(#575757,#4b4b4b);box-shadow:0 1px 1px rgba(0,0,0,.45),inset 0 1px 0 rgba(255,255,255,.12);"></div>
<span style="left:2669.7px;top:1304.0px;font-size:21.5px;line-height:28px;color:#e8e8e8;letter-spacing:0.92px;-webkit-text-stroke:0.45px;">Defines Context</span>
<div style="left:2637.3px;top:1342px;width:23.6px;height:23.6px;border-radius:5.500px;background:linear-gradient(#575757,#4b4b4b);box-shadow:0 1px 1px rgba(0,0,0,.45),inset 0 1px 0 rgba(255,255,255,.12);"></div>
<span style="left:2669.7px;top:1339.8px;font-size:21.5px;line-height:28px;color:#e8e8e8;letter-spacing:0.87px;-webkit-text-stroke:0.45px;">Provides Context</span>
<span style="left:2503.9px;top:1377.3px;font-size:20px;line-height:26px;color:#e8e8e8;letter-spacing:0.63px;-webkit-text-stroke:0.42px;">Content Size</span>
<div style="left:2637.3px;top:1378.1px;width:23.6px;height:23.6px;border-radius:5.500px;background:linear-gradient(#575757,#4b4b4b);box-shadow:0 1px 1px rgba(0,0,0,.45),inset 0 1px 0 rgba(255,255,255,.12);"></div>
<span style="left:2669.7px;top:1375.9px;font-size:21.5px;line-height:28px;color:#e8e8e8;letter-spacing:0.77px;-webkit-text-stroke:0.45px;">Use Preferred Explicit Size</span>
<div style="left:2637.3px;top:1414.8px;width:206.7px;height:30.9px;background:#333333;box-shadow:inset 0 -1.500px 0 #4a4a4a;"></div>
<span style="left:2824.5px;top:1416.3px;font-size:21.5px;line-height:28px;color:#777;letter-spacing:-0.47px;-webkit-text-stroke:0.45px;">0</span>
<div style="left:2848.5px;top:1414px;width:21.5px;height:31.7px;background:#5a5a5a;border-radius:7px;box-shadow:0 1px 1px rgba(0,0,0,.5);"></div>
<svg style="left:2852.25px;top:1417px;" width="14" height="26" viewBox="0 0 14 26"><path d="M2.5 9l4.5-4.500l4.5 4.500M2.5 17l4.5 4.500l4.5-4.5" fill="none" stroke="#f0f0f0" stroke-width="2.3" stroke-linecap="round" stroke-linejoin="round" /></svg>
<div style="left:2888px;top:1414.8px;width:208px;height:30.9px;background:#333333;box-shadow:inset 0 -1.500px 0 #4a4a4a;"></div>
<span style="left:3077.5px;top:1416.3px;font-size:21.5px;line-height:28px;color:#777;letter-spacing:-0.47px;-webkit-text-stroke:0.45px;">0</span>
<div style="left:3100.2px;top:1414px;width:21.8px;height:31.7px;background:#5a5a5a;border-radius:7px;box-shadow:0 1px 1px rgba(0,0,0,.5);"></div>
<svg style="left:3104.1px;top:1417px;" width="14" height="26" viewBox="0 0 14 26"><path d="M2.5 9l4.5-4.500l4.5 4.500M2.5 17l4.5 4.500l4.5-4.5" fill="none" stroke="#f0f0f0" stroke-width="2.3" stroke-linecap="round" stroke-linejoin="round" /></svg>
<span style="left:2710.8px;top:1448.3px;font-size:20px;line-height:26px;color:#e8e8e8;letter-spacing:0.88px;-webkit-text-stroke:0.42px;">Width</span>
<span style="left:2959.8px;top:1448.3px;font-size:20px;line-height:26px;color:#e8e8e8;letter-spacing:0.78px;-webkit-text-stroke:0.42px;">Height</span>
<div style="left:2482.8px;top:1487.5px;width:637.9px;height:2px;background:#3c3c3c;"></div>
<span style="left:2495.9px;top:1500.6px;font-size:21.5px;line-height:28px;color:#e6e6e6;letter-spacing:-0.76px;font-weight:700;-webkit-text-stroke:0.30px;">Key Commands</span>
<div style="left:2467px;top:1534px;width:669px;height:2px;background:#3a3a3a;"></div>
<div style="left:2467px;top:1536px;width:669px;height:151px;background:#1e1e1e;"></div>
<div style="left:2467px;top:1651.4px;width:669px;height:2px;background:#3a3a3a;"></div>
<svg style="left:2473.3px;top:1656px;" width="28" height="28" viewBox="0 0 28 28"><path d="M14 1.500v25M1.5 14h25" fill="none" stroke="#bdbdbd" stroke-width="2" stroke-linecap="round" stroke-linejoin="round" /></svg>
<div style="left:2514.5px;top:1669px;width:26px;height:2px;background:#585858;"></div>
<div style="left:2467px;top:1686px;width:669px;height:2px;background:#3a3a3a;"></div>
<span style="left:2591.6px;top:1701.5px;font-size:20px;line-height:26px;color:#505050;letter-spacing:-0.32px;-webkit-text-stroke:0.42px;">Key</span>
<div style="left:2637.3px;top:1699px;width:483.4px;height:31px;background:#303030;border:1.500px solid #474747;"></div>
<span style="left:2643.3px;top:1700.3px;font-size:21.5px;line-height:28px;color:#6c6c6c;letter-spacing:0.28px;-webkit-text-stroke:0.45px;">Enter ⌘ Key</span>
<span style="left:2547.5px;top:1743.0px;font-size:20px;line-height:26px;color:#505050;letter-spacing:0.64px;-webkit-text-stroke:0.42px;">Selector</span>
<div style="left:2637.3px;top:1738.7px;width:483.4px;height:30.9px;background:#323232;box-shadow:inset 0 -1.500px 0 #444;"></div>
<span style="left:2643.3px;top:1742.5px;font-size:21.5px;line-height:28px;color:#747474;letter-spacing:1.02px;-webkit-text-stroke:0.45px;">action</span>
<div style="left:2482.8px;top:1799.5px;width:637.9px;height:2px;background:#3c3c3c;"></div>
<div style="left:112px;top:76px;width:3024px;height:1758px;border-radius:21px;box-shadow:inset 0 0 0 1.500px rgba(255,255,255,.17);pointer-events:none;"></div>
</div>
</body></html>
